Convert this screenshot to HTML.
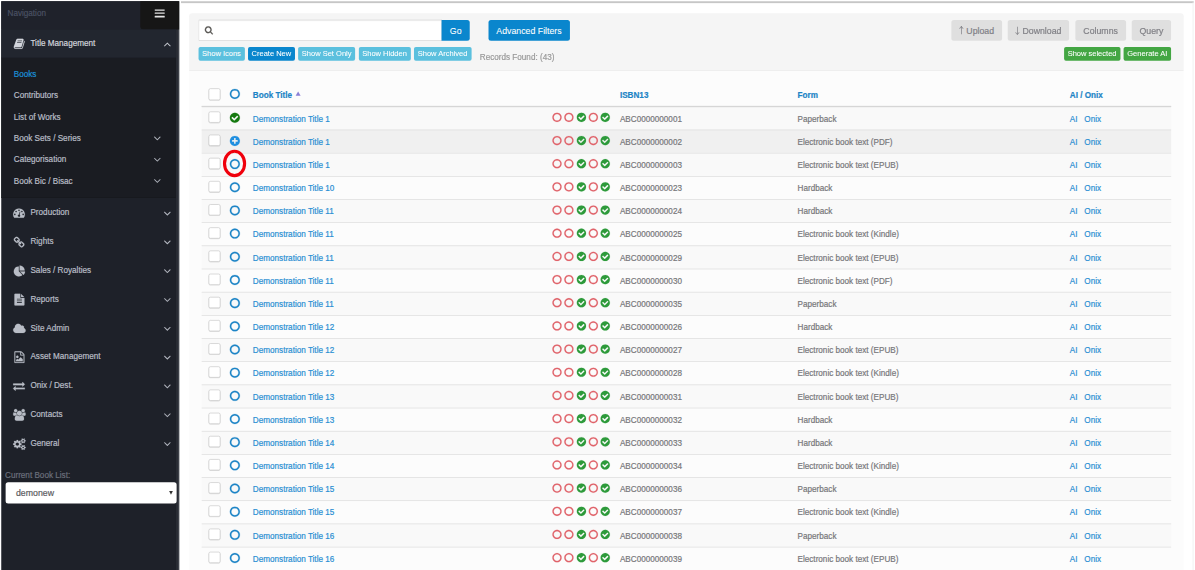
<!DOCTYPE html><html><head><meta charset="utf-8"><title>Books</title><style>
*{box-sizing:border-box}
html,body{margin:0;padding:0;background:#fff;overflow:hidden}
body{width:1195px;height:570px;position:relative;font-family:"Liberation Sans",Arial,Helvetica,sans-serif}
#scale{position:absolute;left:0;top:0;width:1910px;height:914px;transform-origin:0 0;transform:scale(0.6263) ;-webkit-text-stroke:0.3px;font-size:13px;line-height:20px;color:#77777a}
svg.fa{position:absolute;display:block;fill:currentColor;stroke:currentColor;stroke-width:0;overflow:visible}
a{text-decoration:none;color:#2a8fd3}
#topline{position:absolute;left:288.5px;top:2px;width:1617px;height:2.5px;background:#c6c6c6}
#rline{position:absolute;left:1904.4px;top:4px;width:1.5px;height:910px;background:#f4f4f4}
#side{position:absolute;left:2px;top:1.8px;width:284px;height:912px;background:#1e2129;color:#b9bdc6}
#side .strip{position:absolute;right:0;top:0;width:5.5px;height:100%;background:#282b33}
#side .edge{position:absolute;right:0;top:0;width:1.6px;height:100%;background:#3f424a}
#navhead{position:absolute;left:0;top:0;width:278.5px;height:45.2px;background:#1f222b}
#tog i{position:absolute;left:23.2px;width:16px;height:2.3px;background:#e4e4e4;border-radius:.5px}
#navhead .t{position:absolute;left:10px;top:10.5px;color:#4a5163;font-size:13px;line-height:20px}
#tog{position:absolute;right:0;top:0;width:62.5px;height:45.2px;background:#161616;color:#e8e8e8;border-radius:0 0 0 5px}
.mi{position:absolute;left:0;width:278.5px;height:46px}
.mi.open{background:#22262f;color:#d2d5dc;height:46.2px}
.mi .tx{position:absolute;left:46.6px;top:14px;line-height:20px;font-size:13px;white-space:nowrap}
#sub{position:absolute;left:0;top:90.7px;width:278.5px;height:223.4px;background:#1a1c22;border-bottom:1.5px solid #17191e}
.si{position:absolute;left:20px;width:250px;height:34px;line-height:34px;font-size:13px;white-space:nowrap}
.si.act{color:#1a8fd8}
#cbl{position:absolute;left:6px;top:747.2px;font-size:13px;line-height:20px;color:#6b707c;white-space:nowrap}
#sel{position:absolute;left:6.5px;top:768px;width:273.5px;height:34px;background:#fff;border-radius:4px;color:#5b5b60;font-size:14px;line-height:35.5px;padding-left:17px}
#sel .dd{position:absolute;right:6.5px;top:14px;width:0;height:0;border-left:3.6px solid transparent;border-right:3.6px solid transparent;border-top:6.5px solid #333}
#ph{position:absolute;left:301.5px;top:21.4px;width:1588.6px;height:91.6px;background:#f5f5f5;border-bottom:1.7px solid #d6d6d6;z-index:2;border-radius:5px 5px 0 0}
#pb{position:absolute;left:301.5px;top:112.8px;width:1588.6px;height:800px;background:#fcfcfc}
.btn{position:absolute;height:33.5px;line-height:34.5px;border-radius:4px;text-align:center;font-size:14px;white-space:nowrap}
.arw{display:inline-block;width:14px;margin:0 1px 0 -3.5px;text-align:center;font-family:"Noto Sans CJK SC","DejaVu Sans",sans-serif;font-size:14px;line-height:1;font-weight:400;position:relative;top:1.2px;-webkit-text-stroke:0.15px}
.xs{position:absolute;height:22px;line-height:22px;border-radius:3px;text-align:center;font-size:12px;white-space:nowrap;color:#fff}
.xs,.btn.prim{-webkit-text-stroke:0.1px}
.info{background:#5bc0de}
.prim{background:#0a86cd;color:#fff}
.succ{background:#43a643}
.def{background:#dfdfdf;color:#808086}
#q{position:absolute;left:15px;top:9.6px;width:389.2px;height:34.4px;background:#fff;border:1px solid #c8c8c8;border-top:1.6px solid #cfcfcf;border-radius:1px 0 0 1px;box-shadow:inset 0 1.5px 1.5px rgba(0,0,0,.09)}
#rf{position:absolute;left:464.5px;top:60.2px;line-height:20px;font-size:13px;color:#999;white-space:nowrap}
#tb{position:absolute;left:20px;top:0;width:1548px}
.tr{position:absolute;left:0;width:1548px;height:37px;border-top:1.1px solid #d9d9d9}
.tr.h{border-top:none;border-bottom:2px solid #d6d6d6;height:38.6px;z-index:2}
.tr.h .cb{top:8.5px}
.tr.h .c{top:9.1px}
.tr.odd{background:#f9f9f9}
.tr.hov{background:#f0f0f0}
.c{position:absolute;top:8.3px;line-height:20px;white-space:nowrap}
.tr.h .c{font-weight:bold;color:#1c84c6}
.cb{position:absolute;left:11px;top:6.6px;width:19.3px;height:18.3px;border:1px solid #c4c4c4;border-radius:3px;background:#fff;box-shadow:0 1px 1px rgba(0,0,0,.1)}
#ring{position:absolute;left:54.4px;top:126.2px;width:37.1px;height:43.6px;border:5.6px solid #f0000c;border-radius:50%}
.sa{display:inline-block;width:0;height:0;border-left:4px solid transparent;border-right:4px solid transparent;border-bottom:7px solid #8a7fd6;margin-left:2px;vertical-align:3px}
</style></head><body><div id="scale">
<div id="topline"></div><div id="rline"></div>
<div id="side"><div class="strip"></div><div class="edge"></div>
<div id="navhead"><div class="t">Navigation</div></div>
<div id="tog"><i style="top:13.0px"></i><i style="top:18.3px"></i><i style="top:23.6px"></i></div>
<div class="mi open" style="top:45.2px"><svg class="fa" viewBox="-0.5 -1408 1665.3 1536" style="left:19.93px;top:15.25px;width:17.35px;height:16.00px;stroke-width:24px;"><path d="M1639 -1058Q1679 -1001 1657 -929L1382 -23Q1363 41 1305.5 84.5Q1248 128 1183 128H260Q183 128 111.5 74.5Q40 21 12 -57Q-12 -124 10 -184Q10 -188 13 -211Q16 -234 17 -248Q18 -256 14 -269.5Q10 -283 11 -289Q13 -300 19 -310Q25 -320 35.5 -333.5Q46 -347 52 -357Q75 -395 97 -448.5Q119 -502 127 -540Q130 -550 127.5 -570Q125 -590 127 -598Q130 -609 144 -626Q158 -643 161 -649Q182 -685 203 -741Q224 -797 228 -831Q229 -840 225.5 -863Q222 -886 226 -891Q230 -904 248 -921.5Q266 -939 270 -944Q289 -970 312.5 -1028.5Q336 -1087 340 -1125Q341 -1133 337 -1150.5Q333 -1168 335 -1177Q337 -1185 344 -1195Q351 -1205 362 -1218Q373 -1231 379 -1239Q387 -1251 395.5 -1269.5Q404 -1288 410.5 -1304.5Q417 -1321 426.5 -1340.5Q436 -1360 446 -1372.5Q456 -1385 472.5 -1396Q489 -1407 508.5 -1407.5Q528 -1408 556 -1402L555 -1399Q593 -1408 606 -1408H1367Q1441 -1408 1481 -1352Q1521 -1296 1499 -1222L1225 -316Q1189 -197 1153.5 -162.5Q1118 -128 1025 -128H156Q129 -128 118 -113Q107 -97 117 -70Q141 0 261 0H1184Q1213 0 1240 -15.5Q1267 -31 1275 -57L1575 -1044Q1582 -1066 1580 -1101Q1618 -1086 1639 -1058ZM575 -1056Q571 -1043 577 -1033.5Q583 -1024 597 -1024H1205Q1218 -1024 1230.5 -1033.5Q1243 -1043 1247 -1056L1268 -1120Q1272 -1133 1266 -1142.5Q1260 -1152 1246 -1152H638Q625 -1152 612.5 -1142.5Q600 -1133 596 -1120ZM492 -800Q488 -787 494 -777.5Q500 -768 514 -768H1122Q1135 -768 1147.5 -777.5Q1160 -787 1164 -800L1185 -864Q1189 -877 1183 -886.5Q1177 -896 1163 -896H555Q542 -896 529.5 -886.5Q517 -877 513 -864Z"/></svg><div class="tx" style="top:12.4px">Title Management</div><svg class="fa" viewBox="77.0 -851.0 998.0 582.0" style="left:259.80px;top:21.31px;width:10.40px;height:6.06px;stroke-width:19px;"><path d="M1065 -329 1015 -279Q1005 -269 992 -269Q979 -269 969 -279L576 -672L183 -279Q173 -269 160 -269Q147 -269 137 -279L87 -329Q77 -339 77 -352Q77 -365 87 -375L553 -841Q563 -851 576 -851Q589 -851 599 -841L1065 -375Q1075 -365 1075 -352Q1075 -339 1065 -329Z"/></svg></div>
<div id="sub">
<div class="si act" style="top:9.5px">Books</div>
<div class="si " style="top:43.5px">Contributors</div>
<div class="si " style="top:77.5px">List of Works</div>
<div class="si " style="top:111.5px">Book Sets / Series<svg class="fa" viewBox="77.0 -883.0 998.0 582.0" style="left:224.10px;top:14.47px;width:10.40px;height:6.06px;stroke-width:10px;"><path d="M1065 -777 599 -311Q589 -301 576 -301Q563 -301 553 -311L87 -777Q77 -787 77 -800Q77 -813 87 -823L137 -873Q147 -883 160 -883Q173 -883 183 -873L576 -480L969 -873Q979 -883 992 -883Q1005 -883 1015 -873L1065 -823Q1075 -813 1075 -800Q1075 -787 1065 -777Z"/></svg></div>
<div class="si " style="top:145.5px">Categorisation<svg class="fa" viewBox="77.0 -883.0 998.0 582.0" style="left:224.10px;top:14.47px;width:10.40px;height:6.06px;stroke-width:10px;"><path d="M1065 -777 599 -311Q589 -301 576 -301Q563 -301 553 -311L87 -777Q77 -787 77 -800Q77 -813 87 -823L137 -873Q147 -883 160 -883Q173 -883 183 -873L576 -480L969 -873Q979 -883 992 -883Q1005 -883 1015 -873L1065 -823Q1075 -813 1075 -800Q1075 -787 1065 -777Z"/></svg></div>
<div class="si " style="top:179.5px">Book Bic / Bisac<svg class="fa" viewBox="77.0 -883.0 998.0 582.0" style="left:224.10px;top:14.47px;width:10.40px;height:6.06px;stroke-width:10px;"><path d="M1065 -777 599 -311Q589 -301 576 -301Q563 -301 553 -311L87 -777Q77 -787 77 -800Q77 -813 87 -823L137 -873Q147 -883 160 -883Q173 -883 183 -873L576 -480L969 -873Q979 -883 992 -883Q1005 -883 1015 -873L1065 -823Q1075 -813 1075 -800Q1075 -787 1065 -777Z"/></svg></div>
</div>
<div class="mi " style="top:314.1px"><svg class="fa" viewBox="0 -1280.0 1792 1408.0" style="left:19.27px;top:17.52px;width:18.67px;height:14.67px;stroke-width:24px;"><path d="M346.5 -293.5Q384 -331 384 -384Q384 -437 346.5 -474.5Q309 -512 256 -512Q203 -512 165.5 -474.5Q128 -437 128 -384Q128 -331 165.5 -293.5Q203 -256 256 -256Q309 -256 346.5 -293.5ZM538.5 -741.5Q576 -779 576 -832Q576 -885 538.5 -922.5Q501 -960 448 -960Q395 -960 357.5 -922.5Q320 -885 320 -832Q320 -779 357.5 -741.5Q395 -704 448 -704Q501 -704 538.5 -741.5ZM1004 -351 1105 -733Q1111 -759 1097.5 -781.5Q1084 -804 1059 -811Q1034 -818 1011 -804.5Q988 -791 981 -765L880 -383Q820 -378 773 -339.5Q726 -301 710 -241Q690 -164 730 -95Q770 -26 847 -6Q924 14 993 -26Q1062 -66 1082 -143Q1098 -203 1076 -260Q1054 -317 1004 -351ZM1626.5 -293.5Q1664 -331 1664 -384Q1664 -437 1626.5 -474.5Q1589 -512 1536 -512Q1483 -512 1445.5 -474.5Q1408 -437 1408 -384Q1408 -331 1445.5 -293.5Q1483 -256 1536 -256Q1589 -256 1626.5 -293.5ZM986.5 -933.5Q1024 -971 1024 -1024Q1024 -1077 986.5 -1114.5Q949 -1152 896 -1152Q843 -1152 805.5 -1114.5Q768 -1077 768 -1024Q768 -971 805.5 -933.5Q843 -896 896 -896Q949 -896 986.5 -933.5ZM1434.5 -741.5Q1472 -779 1472 -832Q1472 -885 1434.5 -922.5Q1397 -960 1344 -960Q1291 -960 1253.5 -922.5Q1216 -885 1216 -832Q1216 -779 1253.5 -741.5Q1291 -704 1344 -704Q1397 -704 1434.5 -741.5ZM1792 -384Q1792 -123 1651 99Q1632 128 1597 128H195Q160 128 141 99Q0 -122 0 -384Q0 -566 71 -732Q142 -898 262 -1018Q382 -1138 548 -1209Q714 -1280 896 -1280Q1078 -1280 1244 -1209Q1410 -1138 1530 -1018Q1650 -898 1721 -732Q1792 -566 1792 -384Z"/></svg><div class="tx" style="top:14.0px">Production</div><svg class="fa" viewBox="77.0 -883.0 998.0 582.0" style="left:259.80px;top:22.27px;width:10.40px;height:6.06px;stroke-width:19px;"><path d="M1065 -777 599 -311Q589 -301 576 -301Q563 -301 553 -311L87 -777Q77 -787 77 -800Q77 -813 87 -823L137 -873Q147 -883 160 -883Q173 -883 183 -873L576 -480L969 -873Q979 -883 992 -883Q1005 -883 1015 -873L1065 -823Q1075 -813 1075 -800Q1075 -787 1065 -777Z"/></svg></div>
<div class="mi " style="top:360.1px"><svg class="fa" viewBox="16.0 -1520 1632.0 1632" style="left:20.10px;top:16.35px;width:17.00px;height:17.00px;stroke-width:24px;"><path d="M1456 -320Q1456 -360 1428 -388L1220 -596Q1192 -624 1152 -624Q1110 -624 1080 -592Q1083 -589 1099 -573.5Q1115 -558 1120.5 -552Q1126 -546 1135.5 -533Q1145 -520 1148.5 -507.5Q1152 -495 1152 -480Q1152 -440 1124 -412Q1096 -384 1056 -384Q1041 -384 1028.5 -387.5Q1016 -391 1003 -400.5Q990 -410 984 -415.5Q978 -421 962.5 -437Q947 -453 944 -456Q911 -425 911 -383Q911 -343 939 -315L1145 -108Q1172 -81 1213 -81Q1253 -81 1281 -107L1428 -253Q1456 -281 1456 -320ZM753 -1025Q753 -1065 725 -1093L519 -1300Q491 -1328 451 -1328Q412 -1328 383 -1301L236 -1155Q208 -1127 208 -1088Q208 -1048 236 -1020L444 -812Q471 -785 512 -785Q554 -785 584 -816Q581 -819 565 -834.5Q549 -850 543.5 -856Q538 -862 528.5 -875Q519 -888 515.5 -900.5Q512 -913 512 -928Q512 -968 540 -996Q568 -1024 608 -1024Q623 -1024 635.5 -1020.5Q648 -1017 661 -1007.5Q674 -998 680 -992.5Q686 -987 701.5 -971Q717 -955 720 -952Q753 -983 753 -1025ZM1563 -117 1416 29Q1333 112 1213 112Q1092 112 1009 27L803 -180Q720 -263 720 -383Q720 -506 808 -592L720 -680Q634 -592 512 -592Q392 -592 308 -676L100 -884Q16 -968 16 -1088Q16 -1208 101 -1291L248 -1437Q331 -1520 451 -1520Q572 -1520 655 -1435L861 -1228Q944 -1145 944 -1025Q944 -902 856 -816L944 -728Q1030 -816 1152 -816Q1272 -816 1356 -732L1564 -524Q1648 -440 1648 -320Q1648 -200 1563 -117Z"/></svg><div class="tx" style="top:14.0px">Rights</div><svg class="fa" viewBox="77.0 -883.0 998.0 582.0" style="left:259.80px;top:22.27px;width:10.40px;height:6.06px;stroke-width:19px;"><path d="M1065 -777 599 -311Q589 -301 576 -301Q563 -301 553 -311L87 -777Q77 -787 77 -800Q77 -813 87 -823L137 -873Q147 -883 160 -883Q173 -883 183 -873L576 -480L969 -873Q979 -883 992 -883Q1005 -883 1015 -873L1065 -823Q1075 -813 1075 -800Q1075 -787 1065 -777Z"/></svg></div>
<div class="mi " style="top:406.1px"><svg class="fa" viewBox="0.0 -1536 1728.0 1664" style="left:19.60px;top:16.18px;width:18.00px;height:17.34px;stroke-width:24px;"><path d="M768 -646 1314 -100Q1208 8 1066.5 68Q925 128 768 128Q559 128 382.5 25Q206 -78 103 -254.5Q0 -431 0 -640Q0 -849 103 -1025.5Q206 -1202 382.5 -1305Q559 -1408 768 -1408ZM955 -640H1728Q1728 -483 1668 -341.5Q1608 -200 1500 -94ZM1664 -768H896V-1536Q1105 -1536 1281.5 -1433Q1458 -1330 1561 -1153.5Q1664 -977 1664 -768Z"/></svg><div class="tx" style="top:14.0px">Sales / Royalties</div><svg class="fa" viewBox="77.0 -883.0 998.0 582.0" style="left:259.80px;top:22.27px;width:10.40px;height:6.06px;stroke-width:19px;"><path d="M1065 -777 599 -311Q589 -301 576 -301Q563 -301 553 -311L87 -777Q77 -787 77 -800Q77 -813 87 -823L137 -873Q147 -883 160 -883Q173 -883 183 -873L576 -480L969 -873Q979 -883 992 -883Q1005 -883 1015 -873L1065 -823Q1075 -813 1075 -800Q1075 -787 1065 -777Z"/></svg></div>
<div class="mi " style="top:452.1px"><svg class="fa" viewBox="0 -1536 1536 1792" style="left:20.60px;top:15.52px;width:16.00px;height:18.67px;stroke-width:24px;"><path d="M1468 -1060Q1482 -1046 1496 -1024H1024V-1496Q1046 -1482 1060 -1468ZM992 -896H1536V160Q1536 200 1508 228Q1480 256 1440 256H96Q56 256 28 228Q0 200 0 160V-1440Q0 -1480 28 -1508Q56 -1536 96 -1536H896V-992Q896 -952 924 -924Q952 -896 992 -896ZM1152 -160V-224Q1152 -238 1143 -247Q1134 -256 1120 -256H416Q402 -256 393 -247Q384 -238 384 -224V-160Q384 -146 393 -137Q402 -128 416 -128H1120Q1134 -128 1143 -137Q1152 -146 1152 -160ZM1152 -416V-480Q1152 -494 1143 -503Q1134 -512 1120 -512H416Q402 -512 393 -503Q384 -494 384 -480V-416Q384 -402 393 -393Q402 -384 416 -384H1120Q1134 -384 1143 -393Q1152 -402 1152 -416ZM1152 -672V-736Q1152 -750 1143 -759Q1134 -768 1120 -768H416Q402 -768 393 -759Q384 -750 384 -736V-672Q384 -658 393 -649Q402 -640 416 -640H1120Q1134 -640 1143 -649Q1152 -658 1152 -672Z"/></svg><div class="tx" style="top:14.0px">Reports</div><svg class="fa" viewBox="77.0 -883.0 998.0 582.0" style="left:259.80px;top:22.27px;width:10.40px;height:6.06px;stroke-width:19px;"><path d="M1065 -777 599 -311Q589 -301 576 -301Q563 -301 553 -311L87 -777Q77 -787 77 -800Q77 -813 87 -823L137 -873Q147 -883 160 -883Q173 -883 183 -873L576 -480L969 -873Q979 -883 992 -883Q1005 -883 1015 -873L1065 -823Q1075 -813 1075 -800Q1075 -787 1065 -777Z"/></svg></div>
<div class="mi " style="top:498.1px"><svg class="fa" viewBox="0 -1408 1920 1408" style="left:18.60px;top:17.52px;width:20.00px;height:14.67px;stroke-width:24px;"><path d="M1920 -384Q1920 -225 1807.5 -112.5Q1695 0 1536 0H448Q263 0 131.5 -131.5Q0 -263 0 -448Q0 -580 71 -689.5Q142 -799 258 -853Q256 -881 256 -896Q256 -1108 406 -1258Q556 -1408 768 -1408Q926 -1408 1054.5 -1320Q1183 -1232 1242 -1090Q1312 -1152 1408 -1152Q1514 -1152 1589 -1077Q1664 -1002 1664 -896Q1664 -821 1623 -758Q1752 -728 1836 -623.5Q1920 -519 1920 -384Z"/></svg><div class="tx" style="top:14.0px">Site Admin</div><svg class="fa" viewBox="77.0 -883.0 998.0 582.0" style="left:259.80px;top:22.27px;width:10.40px;height:6.06px;stroke-width:19px;"><path d="M1065 -777 599 -311Q589 -301 576 -301Q563 -301 553 -311L87 -777Q77 -787 77 -800Q77 -813 87 -823L137 -873Q147 -883 160 -883Q173 -883 183 -873L576 -480L969 -873Q979 -883 992 -883Q1005 -883 1015 -873L1065 -823Q1075 -813 1075 -800Q1075 -787 1065 -777Z"/></svg></div>
<div class="mi " style="top:544.1px"><svg class="fa" viewBox="0 -1536 1536 1792" style="left:20.60px;top:15.52px;width:16.00px;height:18.67px;stroke-width:24px;"><path d="M1468 -1156Q1496 -1128 1516 -1080Q1536 -1032 1536 -992V160Q1536 200 1508 228Q1480 256 1440 256H96Q56 256 28 228Q0 200 0 160V-1440Q0 -1480 28 -1508Q56 -1536 96 -1536H992Q1032 -1536 1080 -1516Q1128 -1496 1156 -1468ZM1024 -1400V-1024H1400Q1390 -1053 1378 -1065L1065 -1378Q1053 -1390 1024 -1400ZM1408 128V-896H992Q952 -896 924 -924Q896 -952 896 -992V-1408H128V128ZM1280 -320V0H256V-192L448 -384L576 -256L960 -640ZM584 -568Q528 -512 448 -512Q368 -512 312 -568Q256 -624 256 -704Q256 -784 312 -840Q368 -896 448 -896Q528 -896 584 -840Q640 -784 640 -704Q640 -624 584 -568Z"/></svg><div class="tx" style="top:14.0px">Asset Management</div><svg class="fa" viewBox="77.0 -883.0 998.0 582.0" style="left:259.80px;top:22.27px;width:10.40px;height:6.06px;stroke-width:19px;"><path d="M1065 -777 599 -311Q589 -301 576 -301Q563 -301 553 -311L87 -777Q77 -787 77 -800Q77 -813 87 -823L137 -873Q147 -883 160 -883Q173 -883 183 -873L576 -480L969 -873Q979 -883 992 -883Q1005 -883 1015 -873L1065 -823Q1075 -813 1075 -800Q1075 -787 1065 -777Z"/></svg></div>
<div class="mi " style="top:590.1px"><svg class="fa" viewBox="0 -1248 1792 1344" style="left:19.27px;top:17.85px;width:18.67px;height:14.00px;stroke-width:24px;"><path d="M1792 -352V-160Q1792 -147 1782.5 -137.5Q1773 -128 1760 -128H384V64Q384 77 374.5 86.5Q365 96 352 96Q340 96 328 86L9 -234Q0 -243 0 -256Q0 -270 9 -279L329 -599Q338 -608 352 -608Q365 -608 374.5 -598.5Q384 -589 384 -576V-384H1760Q1773 -384 1782.5 -374.5Q1792 -365 1792 -352ZM1783 -873 1463 -553Q1454 -544 1440 -544Q1427 -544 1417.5 -553.5Q1408 -563 1408 -576V-768H32Q19 -768 9.5 -777.5Q0 -787 0 -800V-992Q0 -1005 9.5 -1014.5Q19 -1024 32 -1024H1408V-1216Q1408 -1230 1417 -1239Q1426 -1248 1440 -1248Q1452 -1248 1464 -1238L1783 -919Q1792 -910 1792 -896Q1792 -882 1783 -873Z"/></svg><div class="tx" style="top:14.0px">Onix / Dest.</div><svg class="fa" viewBox="77.0 -883.0 998.0 582.0" style="left:259.80px;top:22.27px;width:10.40px;height:6.06px;stroke-width:19px;"><path d="M1065 -777 599 -311Q589 -301 576 -301Q563 -301 553 -311L87 -777Q77 -787 77 -800Q77 -813 87 -823L137 -873Q147 -883 160 -883Q173 -883 183 -873L576 -480L969 -873Q979 -883 992 -883Q1005 -883 1015 -873L1065 -823Q1075 -813 1075 -800Q1075 -787 1065 -777Z"/></svg></div>
<div class="mi " style="top:636.1px"><svg class="fa" viewBox="0 -1536.0 1920 1792.0" style="left:18.60px;top:15.52px;width:20.00px;height:18.67px;stroke-width:24px;"><path d="M593 -640Q431 -635 328 -512H194Q112 -512 56 -552.5Q0 -593 0 -671Q0 -1024 124 -1024Q130 -1024 167.5 -1003Q205 -982 265 -960.5Q325 -939 384 -939Q451 -939 517 -962Q512 -925 512 -896Q512 -757 593 -640ZM1664 -3Q1664 117 1591 186.5Q1518 256 1397 256H523Q402 256 329 186.5Q256 117 256 -3Q256 -56 259.5 -106.5Q263 -157 273.5 -215.5Q284 -274 300 -324Q316 -374 343 -421.5Q370 -469 405 -502.5Q440 -536 490.5 -556Q541 -576 602 -576Q612 -576 645 -554.5Q678 -533 718 -506.5Q758 -480 825 -458.5Q892 -437 960 -437Q1028 -437 1095 -458.5Q1162 -480 1202 -506.5Q1242 -533 1275 -554.5Q1308 -576 1318 -576Q1379 -576 1429.5 -556Q1480 -536 1515 -502.5Q1550 -469 1577 -421.5Q1604 -374 1620 -324Q1636 -274 1646.5 -215.5Q1657 -157 1660.5 -106.5Q1664 -56 1664 -3ZM565 -1461Q640 -1386 640 -1280Q640 -1174 565 -1099Q490 -1024 384 -1024Q278 -1024 203 -1099Q128 -1174 128 -1280Q128 -1386 203 -1461Q278 -1536 384 -1536Q490 -1536 565 -1461ZM1231.5 -1167.5Q1344 -1055 1344 -896Q1344 -737 1231.5 -624.5Q1119 -512 960 -512Q801 -512 688.5 -624.5Q576 -737 576 -896Q576 -1055 688.5 -1167.5Q801 -1280 960 -1280Q1119 -1280 1231.5 -1167.5ZM1920 -671Q1920 -593 1864 -552.5Q1808 -512 1726 -512H1592Q1489 -635 1327 -640Q1408 -757 1408 -896Q1408 -925 1403 -962Q1469 -939 1536 -939Q1595 -939 1655 -960.5Q1715 -982 1752.5 -1003Q1790 -1024 1796 -1024Q1920 -1024 1920 -671ZM1717 -1461Q1792 -1386 1792 -1280Q1792 -1174 1717 -1099Q1642 -1024 1536 -1024Q1430 -1024 1355 -1099Q1280 -1174 1280 -1280Q1280 -1386 1355 -1461Q1430 -1536 1536 -1536Q1642 -1536 1717 -1461Z"/></svg><div class="tx" style="top:14.0px">Contacts</div><svg class="fa" viewBox="77.0 -883.0 998.0 582.0" style="left:259.80px;top:22.27px;width:10.40px;height:6.06px;stroke-width:19px;"><path d="M1065 -777 599 -311Q589 -301 576 -301Q563 -301 553 -311L87 -777Q77 -787 77 -800Q77 -813 87 -823L137 -873Q147 -883 160 -883Q173 -883 183 -873L576 -480L969 -873Q979 -883 992 -883Q1005 -883 1015 -873L1065 -823Q1075 -813 1075 -800Q1075 -787 1065 -777Z"/></svg></div>
<div class="mi " style="top:682.1px"><svg class="fa" viewBox="0 -1520 1920 1761" style="left:18.60px;top:15.68px;width:20.00px;height:18.35px;stroke-width:24px;"><path d="M821 -459Q896 -534 896 -640Q896 -746 821 -821Q746 -896 640 -896Q534 -896 459 -821Q384 -746 384 -640Q384 -534 459 -459Q534 -384 640 -384Q746 -384 821 -459ZM1664 -128Q1664 -180 1626 -218Q1588 -256 1536 -256Q1484 -256 1446 -218Q1408 -180 1408 -128Q1408 -75 1445.5 -37.5Q1483 0 1536 0Q1589 0 1626.5 -37.5Q1664 -75 1664 -128ZM1664 -1152Q1664 -1204 1626 -1242Q1588 -1280 1536 -1280Q1484 -1280 1446 -1242Q1408 -1204 1408 -1152Q1408 -1099 1445.5 -1061.5Q1483 -1024 1536 -1024Q1589 -1024 1626.5 -1061.5Q1664 -1099 1664 -1152ZM1280 -731V-546Q1280 -536 1273 -526.5Q1266 -517 1257 -516L1102 -492Q1091 -457 1070 -416Q1104 -368 1160 -301Q1167 -290 1167 -281Q1167 -269 1160 -262Q1137 -232 1077.5 -172.5Q1018 -113 999 -113Q988 -113 978 -120L863 -210Q826 -191 786 -179Q775 -71 763 -24Q756 0 733 0H547Q536 0 527 -7.5Q518 -15 517 -25L494 -178Q460 -188 419 -209L301 -120Q294 -113 281 -113Q270 -113 260 -121Q116 -254 116 -281Q116 -290 123 -300Q133 -314 164 -353Q195 -392 211 -414Q188 -458 176 -496L24 -520Q14 -521 7 -529.5Q0 -538 0 -549V-734Q0 -744 7 -753.5Q14 -763 23 -764L178 -788Q189 -823 210 -864Q176 -912 120 -979Q113 -990 113 -999Q113 -1011 120 -1019Q142 -1049 202 -1108Q262 -1167 281 -1167Q292 -1167 302 -1160L417 -1070Q451 -1088 494 -1102Q505 -1210 517 -1256Q524 -1280 547 -1280H733Q744 -1280 753 -1272.5Q762 -1265 763 -1255L786 -1102Q820 -1092 861 -1071L979 -1160Q987 -1167 999 -1167Q1010 -1167 1020 -1159Q1164 -1026 1164 -999Q1164 -991 1157 -980Q1145 -964 1115 -926Q1085 -888 1070 -866Q1093 -818 1104 -784L1256 -761Q1266 -759 1273 -750.5Q1280 -742 1280 -731ZM1920 -198V-58Q1920 -42 1771 -27Q1759 0 1741 25Q1792 138 1792 163Q1792 167 1788 170Q1666 241 1664 241Q1656 241 1618 194Q1580 147 1566 126Q1546 128 1536 128Q1526 128 1506 126Q1492 147 1454 194Q1416 241 1408 241Q1406 241 1284 170Q1280 167 1280 163Q1280 138 1331 25Q1313 0 1301 -27Q1152 -42 1152 -58V-198Q1152 -214 1301 -229Q1314 -258 1331 -281Q1280 -394 1280 -419Q1280 -423 1284 -426Q1288 -428 1319 -446Q1350 -464 1378 -480Q1406 -496 1408 -496Q1416 -496 1454 -449.5Q1492 -403 1506 -382Q1526 -384 1536 -384Q1546 -384 1566 -382Q1617 -453 1658 -494L1664 -496Q1668 -496 1788 -426Q1792 -423 1792 -419Q1792 -394 1741 -281Q1758 -258 1771 -229Q1920 -214 1920 -198ZM1920 -1222V-1082Q1920 -1066 1771 -1051Q1759 -1024 1741 -999Q1792 -886 1792 -861Q1792 -857 1788 -854Q1666 -783 1664 -783Q1656 -783 1618 -830Q1580 -877 1566 -898Q1546 -896 1536 -896Q1526 -896 1506 -898Q1492 -877 1454 -830Q1416 -783 1408 -783Q1406 -783 1284 -854Q1280 -857 1280 -861Q1280 -886 1331 -999Q1313 -1024 1301 -1051Q1152 -1066 1152 -1082V-1222Q1152 -1238 1301 -1253Q1314 -1282 1331 -1305Q1280 -1418 1280 -1443Q1280 -1447 1284 -1450Q1288 -1452 1319 -1470Q1350 -1488 1378 -1504Q1406 -1520 1408 -1520Q1416 -1520 1454 -1473.5Q1492 -1427 1506 -1406Q1526 -1408 1536 -1408Q1546 -1408 1566 -1406Q1617 -1477 1658 -1518L1664 -1520Q1668 -1520 1788 -1450Q1792 -1447 1792 -1443Q1792 -1418 1741 -1305Q1758 -1282 1771 -1253Q1920 -1238 1920 -1222Z"/></svg><div class="tx" style="top:14.0px">General</div><svg class="fa" viewBox="77.0 -883.0 998.0 582.0" style="left:259.80px;top:22.27px;width:10.40px;height:6.06px;stroke-width:19px;"><path d="M1065 -777 599 -311Q589 -301 576 -301Q563 -301 553 -311L87 -777Q77 -787 77 -800Q77 -813 87 -823L137 -873Q147 -883 160 -883Q173 -883 183 -873L576 -480L969 -873Q979 -883 992 -883Q1005 -883 1015 -873L1065 -823Q1075 -813 1075 -800Q1075 -787 1065 -777Z"/></svg></div>
<div id="cbl">Current Book List:</div><div id="sel">demonew<span class="dd"></span></div>
</div>
<div id="ph">
<div id="q"><svg class="fa" viewBox="0.0 -1408.0 1664.0 1664.0" style="left:9.80px;top:10.10px;width:13.00px;height:13.00px;fill:#5a5856;stroke:#5a5856;stroke-width:26px;"><path d="M1020.5 -387.5Q1152 -519 1152 -704Q1152 -889 1020.5 -1020.5Q889 -1152 704 -1152Q519 -1152 387.5 -1020.5Q256 -889 256 -704Q256 -519 387.5 -387.5Q519 -256 704 -256Q889 -256 1020.5 -387.5ZM1664 128Q1664 180 1626 218Q1588 256 1536 256Q1482 256 1446 218L1103 -124Q924 0 704 0Q561 0 430.5 -55.5Q300 -111 205.5 -205.5Q111 -300 55.5 -430.5Q0 -561 0 -704Q0 -847 55.5 -977.5Q111 -1108 205.5 -1202.5Q300 -1297 430.5 -1352.5Q561 -1408 704 -1408Q847 -1408 977.5 -1352.5Q1108 -1297 1202.5 -1202.5Q1297 -1108 1352.5 -977.5Q1408 -847 1408 -704Q1408 -484 1284 -305L1627 38Q1664 75 1664 128Z"/></svg></div>
<div class="btn prim" style="left:403.4px;top:10.5px;width:45.5px;border-radius:0 4px 4px 0">Go</div>
<div class="btn prim" style="left:478.2px;top:10.5px;width:130px">Advanced Filters</div>
<div class="xs info" style="left:15.0px;top:54px;width:74.2px">Show Icons</div>
<div class="xs prim" style="left:94.3px;top:54px;width:75px">Create New</div>
<div class="xs info" style="left:174.3px;top:54px;width:91.5px">Show Set Only</div>
<div class="xs info" style="left:271px;top:54px;width:83px">Show Hidden</div>
<div class="xs info" style="left:359.2px;top:54px;width:92px">Show Archived</div>
<div id="rf">Records Found: (43)</div>
<div class="btn def" style="left:1217.2px;top:10.5px;width:81.4px"><span class="arw">&#8593;</span>Upload</div>
<div class="btn def" style="left:1307.1px;top:10.5px;width:98.6px"><span class="arw">&#8595;</span>Download</div>
<div class="btn def" style="left:1415.3px;top:10.5px;width:81px">Columns</div>
<div class="btn def" style="left:1505.2px;top:10.5px;width:63.6px">Query</div>
<div class="xs succ" style="left:1397.2px;top:54px;width:90px">Show selected</div>
<div class="xs succ" style="left:1492px;top:54px;width:76.8px">Generate AI</div>
</div>
<div id="pb"><div id="tb">
<div class="tr h" style="top:20px"><div class="cb"></div><svg class="fa" viewBox="0.0 -1408.0 1536.0 1536.0" style="left:45.60px;top:9.30px;width:16.00px;height:16.00px;fill:#1c84c6;stroke:#1c84c6;stroke-width:29px;"><path d="M1041 -1111Q916 -1184 768 -1184Q620 -1184 495 -1111Q370 -1038 297 -913Q224 -788 224 -640Q224 -492 297 -367Q370 -242 495 -169Q620 -96 768 -96Q916 -96 1041 -169Q1166 -242 1239 -367Q1312 -492 1312 -640Q1312 -788 1239 -913Q1166 -1038 1041 -1111ZM1433 -1025.5Q1536 -849 1536 -640Q1536 -431 1433 -254.5Q1330 -78 1153.5 25Q977 128 768 128Q559 128 382.5 25Q206 -78 103 -254.5Q0 -431 0 -640Q0 -849 103 -1025.5Q206 -1202 382.5 -1305Q559 -1408 768 -1408Q977 -1408 1153.5 -1305Q1330 -1202 1433 -1025.5Z"/></svg><div class="c" style="left:82.2px">Book Title <span class="sa"></span></div><div class="c" style="left:668.3px">ISBN13</div><div class="c" style="left:951.9px">Form</div><div class="c" style="left:1386.7px">AI / Onix</div></div>
<div class="tr odd" style="top:57.7px"><div class="cb"></div><svg class="fa" viewBox="0.0 -1408.0 1536.0 1536.0" style="left:45.60px;top:8.70px;width:16.00px;height:16.00px;fill:#15790f;stroke:#15790f;stroke-width:19px;"><path d="M1284 -802Q1284 -830 1266 -848L1175 -938Q1156 -957 1130 -957Q1104 -957 1085 -938L677 -531L451 -757Q432 -776 406 -776Q380 -776 361 -757L270 -667Q252 -649 252 -621Q252 -594 270 -576L632 -214Q651 -195 677 -195Q704 -195 723 -214L1266 -757Q1284 -775 1284 -802ZM1433 -1025.5Q1536 -849 1536 -640Q1536 -431 1433 -254.5Q1330 -78 1153.5 25Q977 128 768 128Q559 128 382.5 25Q206 -78 103 -254.5Q0 -431 0 -640Q0 -849 103 -1025.5Q206 -1202 382.5 -1305Q559 -1408 768 -1408Q977 -1408 1153.5 -1305Q1330 -1202 1433 -1025.5Z"/></svg><div class="c" style="left:82.2px"><a>Demonstration Title 1</a></div><svg class="fa" viewBox="0.0 -1408.0 1536.0 1536.0" style="left:560.63px;top:8.93px;width:14.74px;height:14.74px;fill:#e0636a;stroke:#e0636a;stroke-width:21px;"><path d="M1041 -1111Q916 -1184 768 -1184Q620 -1184 495 -1111Q370 -1038 297 -913Q224 -788 224 -640Q224 -492 297 -367Q370 -242 495 -169Q620 -96 768 -96Q916 -96 1041 -169Q1166 -242 1239 -367Q1312 -492 1312 -640Q1312 -788 1239 -913Q1166 -1038 1041 -1111ZM1433 -1025.5Q1536 -849 1536 -640Q1536 -431 1433 -254.5Q1330 -78 1153.5 25Q977 128 768 128Q559 128 382.5 25Q206 -78 103 -254.5Q0 -431 0 -640Q0 -849 103 -1025.5Q206 -1202 382.5 -1305Q559 -1408 768 -1408Q977 -1408 1153.5 -1305Q1330 -1202 1433 -1025.5Z"/></svg><svg class="fa" viewBox="0.0 -1408.0 1536.0 1536.0" style="left:579.88px;top:8.93px;width:14.74px;height:14.74px;fill:#e0636a;stroke:#e0636a;stroke-width:21px;"><path d="M1041 -1111Q916 -1184 768 -1184Q620 -1184 495 -1111Q370 -1038 297 -913Q224 -788 224 -640Q224 -492 297 -367Q370 -242 495 -169Q620 -96 768 -96Q916 -96 1041 -169Q1166 -242 1239 -367Q1312 -492 1312 -640Q1312 -788 1239 -913Q1166 -1038 1041 -1111ZM1433 -1025.5Q1536 -849 1536 -640Q1536 -431 1433 -254.5Q1330 -78 1153.5 25Q977 128 768 128Q559 128 382.5 25Q206 -78 103 -254.5Q0 -431 0 -640Q0 -849 103 -1025.5Q206 -1202 382.5 -1305Q559 -1408 768 -1408Q977 -1408 1153.5 -1305Q1330 -1202 1433 -1025.5Z"/></svg><svg class="fa" viewBox="0.0 -1408.0 1536.0 1536.0" style="left:599.13px;top:8.93px;width:14.74px;height:14.74px;fill:#2d9a3a;stroke:#2d9a3a;stroke-width:21px;"><path d="M1284 -802Q1284 -830 1266 -848L1175 -938Q1156 -957 1130 -957Q1104 -957 1085 -938L677 -531L451 -757Q432 -776 406 -776Q380 -776 361 -757L270 -667Q252 -649 252 -621Q252 -594 270 -576L632 -214Q651 -195 677 -195Q704 -195 723 -214L1266 -757Q1284 -775 1284 -802ZM1433 -1025.5Q1536 -849 1536 -640Q1536 -431 1433 -254.5Q1330 -78 1153.5 25Q977 128 768 128Q559 128 382.5 25Q206 -78 103 -254.5Q0 -431 0 -640Q0 -849 103 -1025.5Q206 -1202 382.5 -1305Q559 -1408 768 -1408Q977 -1408 1153.5 -1305Q1330 -1202 1433 -1025.5Z"/></svg><svg class="fa" viewBox="0.0 -1408.0 1536.0 1536.0" style="left:618.38px;top:8.93px;width:14.74px;height:14.74px;fill:#e0636a;stroke:#e0636a;stroke-width:21px;"><path d="M1041 -1111Q916 -1184 768 -1184Q620 -1184 495 -1111Q370 -1038 297 -913Q224 -788 224 -640Q224 -492 297 -367Q370 -242 495 -169Q620 -96 768 -96Q916 -96 1041 -169Q1166 -242 1239 -367Q1312 -492 1312 -640Q1312 -788 1239 -913Q1166 -1038 1041 -1111ZM1433 -1025.5Q1536 -849 1536 -640Q1536 -431 1433 -254.5Q1330 -78 1153.5 25Q977 128 768 128Q559 128 382.5 25Q206 -78 103 -254.5Q0 -431 0 -640Q0 -849 103 -1025.5Q206 -1202 382.5 -1305Q559 -1408 768 -1408Q977 -1408 1153.5 -1305Q1330 -1202 1433 -1025.5Z"/></svg><svg class="fa" viewBox="0.0 -1408.0 1536.0 1536.0" style="left:637.63px;top:8.93px;width:14.74px;height:14.74px;fill:#2d9a3a;stroke:#2d9a3a;stroke-width:21px;"><path d="M1284 -802Q1284 -830 1266 -848L1175 -938Q1156 -957 1130 -957Q1104 -957 1085 -938L677 -531L451 -757Q432 -776 406 -776Q380 -776 361 -757L270 -667Q252 -649 252 -621Q252 -594 270 -576L632 -214Q651 -195 677 -195Q704 -195 723 -214L1266 -757Q1284 -775 1284 -802ZM1433 -1025.5Q1536 -849 1536 -640Q1536 -431 1433 -254.5Q1330 -78 1153.5 25Q977 128 768 128Q559 128 382.5 25Q206 -78 103 -254.5Q0 -431 0 -640Q0 -849 103 -1025.5Q206 -1202 382.5 -1305Q559 -1408 768 -1408Q977 -1408 1153.5 -1305Q1330 -1202 1433 -1025.5Z"/></svg><div class="c" style="left:668.3px">ABC0000000001</div><div class="c" style="left:951.9px">Paperback</div><div class="c" style="left:1386.7px"><a>AI</a> &nbsp; <a>Onix</a></div></div>
<div class="tr hov" style="top:94.7px"><div class="cb"></div><svg class="fa" viewBox="0.0 -1408.0 1536.0 1536.0" style="left:45.60px;top:8.70px;width:16.00px;height:16.00px;fill:#1f8fe0;stroke:#1f8fe0;stroke-width:19px;"><path d="M1216 -576V-704Q1216 -730 1197 -749Q1178 -768 1152 -768H896V-1024Q896 -1050 877 -1069Q858 -1088 832 -1088H704Q678 -1088 659 -1069Q640 -1050 640 -1024V-768H384Q358 -768 339 -749Q320 -730 320 -704V-576Q320 -550 339 -531Q358 -512 384 -512H640V-256Q640 -230 659 -211Q678 -192 704 -192H832Q858 -192 877 -211Q896 -230 896 -256V-512H1152Q1178 -512 1197 -531Q1216 -550 1216 -576ZM1433 -1025.5Q1536 -849 1536 -640Q1536 -431 1433 -254.5Q1330 -78 1153.5 25Q977 128 768 128Q559 128 382.5 25Q206 -78 103 -254.5Q0 -431 0 -640Q0 -849 103 -1025.5Q206 -1202 382.5 -1305Q559 -1408 768 -1408Q977 -1408 1153.5 -1305Q1330 -1202 1433 -1025.5Z"/></svg><div class="c" style="left:82.2px"><a>Demonstration Title 1</a></div><svg class="fa" viewBox="0.0 -1408.0 1536.0 1536.0" style="left:560.63px;top:8.93px;width:14.74px;height:14.74px;fill:#e0636a;stroke:#e0636a;stroke-width:21px;"><path d="M1041 -1111Q916 -1184 768 -1184Q620 -1184 495 -1111Q370 -1038 297 -913Q224 -788 224 -640Q224 -492 297 -367Q370 -242 495 -169Q620 -96 768 -96Q916 -96 1041 -169Q1166 -242 1239 -367Q1312 -492 1312 -640Q1312 -788 1239 -913Q1166 -1038 1041 -1111ZM1433 -1025.5Q1536 -849 1536 -640Q1536 -431 1433 -254.5Q1330 -78 1153.5 25Q977 128 768 128Q559 128 382.5 25Q206 -78 103 -254.5Q0 -431 0 -640Q0 -849 103 -1025.5Q206 -1202 382.5 -1305Q559 -1408 768 -1408Q977 -1408 1153.5 -1305Q1330 -1202 1433 -1025.5Z"/></svg><svg class="fa" viewBox="0.0 -1408.0 1536.0 1536.0" style="left:579.88px;top:8.93px;width:14.74px;height:14.74px;fill:#e0636a;stroke:#e0636a;stroke-width:21px;"><path d="M1041 -1111Q916 -1184 768 -1184Q620 -1184 495 -1111Q370 -1038 297 -913Q224 -788 224 -640Q224 -492 297 -367Q370 -242 495 -169Q620 -96 768 -96Q916 -96 1041 -169Q1166 -242 1239 -367Q1312 -492 1312 -640Q1312 -788 1239 -913Q1166 -1038 1041 -1111ZM1433 -1025.5Q1536 -849 1536 -640Q1536 -431 1433 -254.5Q1330 -78 1153.5 25Q977 128 768 128Q559 128 382.5 25Q206 -78 103 -254.5Q0 -431 0 -640Q0 -849 103 -1025.5Q206 -1202 382.5 -1305Q559 -1408 768 -1408Q977 -1408 1153.5 -1305Q1330 -1202 1433 -1025.5Z"/></svg><svg class="fa" viewBox="0.0 -1408.0 1536.0 1536.0" style="left:599.13px;top:8.93px;width:14.74px;height:14.74px;fill:#2d9a3a;stroke:#2d9a3a;stroke-width:21px;"><path d="M1284 -802Q1284 -830 1266 -848L1175 -938Q1156 -957 1130 -957Q1104 -957 1085 -938L677 -531L451 -757Q432 -776 406 -776Q380 -776 361 -757L270 -667Q252 -649 252 -621Q252 -594 270 -576L632 -214Q651 -195 677 -195Q704 -195 723 -214L1266 -757Q1284 -775 1284 -802ZM1433 -1025.5Q1536 -849 1536 -640Q1536 -431 1433 -254.5Q1330 -78 1153.5 25Q977 128 768 128Q559 128 382.5 25Q206 -78 103 -254.5Q0 -431 0 -640Q0 -849 103 -1025.5Q206 -1202 382.5 -1305Q559 -1408 768 -1408Q977 -1408 1153.5 -1305Q1330 -1202 1433 -1025.5Z"/></svg><svg class="fa" viewBox="0.0 -1408.0 1536.0 1536.0" style="left:618.38px;top:8.93px;width:14.74px;height:14.74px;fill:#e0636a;stroke:#e0636a;stroke-width:21px;"><path d="M1041 -1111Q916 -1184 768 -1184Q620 -1184 495 -1111Q370 -1038 297 -913Q224 -788 224 -640Q224 -492 297 -367Q370 -242 495 -169Q620 -96 768 -96Q916 -96 1041 -169Q1166 -242 1239 -367Q1312 -492 1312 -640Q1312 -788 1239 -913Q1166 -1038 1041 -1111ZM1433 -1025.5Q1536 -849 1536 -640Q1536 -431 1433 -254.5Q1330 -78 1153.5 25Q977 128 768 128Q559 128 382.5 25Q206 -78 103 -254.5Q0 -431 0 -640Q0 -849 103 -1025.5Q206 -1202 382.5 -1305Q559 -1408 768 -1408Q977 -1408 1153.5 -1305Q1330 -1202 1433 -1025.5Z"/></svg><svg class="fa" viewBox="0.0 -1408.0 1536.0 1536.0" style="left:637.63px;top:8.93px;width:14.74px;height:14.74px;fill:#2d9a3a;stroke:#2d9a3a;stroke-width:21px;"><path d="M1284 -802Q1284 -830 1266 -848L1175 -938Q1156 -957 1130 -957Q1104 -957 1085 -938L677 -531L451 -757Q432 -776 406 -776Q380 -776 361 -757L270 -667Q252 -649 252 -621Q252 -594 270 -576L632 -214Q651 -195 677 -195Q704 -195 723 -214L1266 -757Q1284 -775 1284 -802ZM1433 -1025.5Q1536 -849 1536 -640Q1536 -431 1433 -254.5Q1330 -78 1153.5 25Q977 128 768 128Q559 128 382.5 25Q206 -78 103 -254.5Q0 -431 0 -640Q0 -849 103 -1025.5Q206 -1202 382.5 -1305Q559 -1408 768 -1408Q977 -1408 1153.5 -1305Q1330 -1202 1433 -1025.5Z"/></svg><div class="c" style="left:668.3px">ABC0000000002</div><div class="c" style="left:951.9px">Electronic book text (PDF)</div><div class="c" style="left:1386.7px"><a>AI</a> &nbsp; <a>Onix</a></div></div>
<div class="tr odd" style="top:131.7px"><div class="cb"></div><svg class="fa" viewBox="0.0 -1408.0 1536.0 1536.0" style="left:45.60px;top:8.70px;width:16.00px;height:16.00px;fill:#1c84c6;stroke:#1c84c6;stroke-width:29px;"><path d="M1041 -1111Q916 -1184 768 -1184Q620 -1184 495 -1111Q370 -1038 297 -913Q224 -788 224 -640Q224 -492 297 -367Q370 -242 495 -169Q620 -96 768 -96Q916 -96 1041 -169Q1166 -242 1239 -367Q1312 -492 1312 -640Q1312 -788 1239 -913Q1166 -1038 1041 -1111ZM1433 -1025.5Q1536 -849 1536 -640Q1536 -431 1433 -254.5Q1330 -78 1153.5 25Q977 128 768 128Q559 128 382.5 25Q206 -78 103 -254.5Q0 -431 0 -640Q0 -849 103 -1025.5Q206 -1202 382.5 -1305Q559 -1408 768 -1408Q977 -1408 1153.5 -1305Q1330 -1202 1433 -1025.5Z"/></svg><div class="c" style="left:82.2px"><a>Demonstration Title 1</a></div><svg class="fa" viewBox="0.0 -1408.0 1536.0 1536.0" style="left:560.63px;top:8.93px;width:14.74px;height:14.74px;fill:#e0636a;stroke:#e0636a;stroke-width:21px;"><path d="M1041 -1111Q916 -1184 768 -1184Q620 -1184 495 -1111Q370 -1038 297 -913Q224 -788 224 -640Q224 -492 297 -367Q370 -242 495 -169Q620 -96 768 -96Q916 -96 1041 -169Q1166 -242 1239 -367Q1312 -492 1312 -640Q1312 -788 1239 -913Q1166 -1038 1041 -1111ZM1433 -1025.5Q1536 -849 1536 -640Q1536 -431 1433 -254.5Q1330 -78 1153.5 25Q977 128 768 128Q559 128 382.5 25Q206 -78 103 -254.5Q0 -431 0 -640Q0 -849 103 -1025.5Q206 -1202 382.5 -1305Q559 -1408 768 -1408Q977 -1408 1153.5 -1305Q1330 -1202 1433 -1025.5Z"/></svg><svg class="fa" viewBox="0.0 -1408.0 1536.0 1536.0" style="left:579.88px;top:8.93px;width:14.74px;height:14.74px;fill:#e0636a;stroke:#e0636a;stroke-width:21px;"><path d="M1041 -1111Q916 -1184 768 -1184Q620 -1184 495 -1111Q370 -1038 297 -913Q224 -788 224 -640Q224 -492 297 -367Q370 -242 495 -169Q620 -96 768 -96Q916 -96 1041 -169Q1166 -242 1239 -367Q1312 -492 1312 -640Q1312 -788 1239 -913Q1166 -1038 1041 -1111ZM1433 -1025.5Q1536 -849 1536 -640Q1536 -431 1433 -254.5Q1330 -78 1153.5 25Q977 128 768 128Q559 128 382.5 25Q206 -78 103 -254.5Q0 -431 0 -640Q0 -849 103 -1025.5Q206 -1202 382.5 -1305Q559 -1408 768 -1408Q977 -1408 1153.5 -1305Q1330 -1202 1433 -1025.5Z"/></svg><svg class="fa" viewBox="0.0 -1408.0 1536.0 1536.0" style="left:599.13px;top:8.93px;width:14.74px;height:14.74px;fill:#2d9a3a;stroke:#2d9a3a;stroke-width:21px;"><path d="M1284 -802Q1284 -830 1266 -848L1175 -938Q1156 -957 1130 -957Q1104 -957 1085 -938L677 -531L451 -757Q432 -776 406 -776Q380 -776 361 -757L270 -667Q252 -649 252 -621Q252 -594 270 -576L632 -214Q651 -195 677 -195Q704 -195 723 -214L1266 -757Q1284 -775 1284 -802ZM1433 -1025.5Q1536 -849 1536 -640Q1536 -431 1433 -254.5Q1330 -78 1153.5 25Q977 128 768 128Q559 128 382.5 25Q206 -78 103 -254.5Q0 -431 0 -640Q0 -849 103 -1025.5Q206 -1202 382.5 -1305Q559 -1408 768 -1408Q977 -1408 1153.5 -1305Q1330 -1202 1433 -1025.5Z"/></svg><svg class="fa" viewBox="0.0 -1408.0 1536.0 1536.0" style="left:618.38px;top:8.93px;width:14.74px;height:14.74px;fill:#e0636a;stroke:#e0636a;stroke-width:21px;"><path d="M1041 -1111Q916 -1184 768 -1184Q620 -1184 495 -1111Q370 -1038 297 -913Q224 -788 224 -640Q224 -492 297 -367Q370 -242 495 -169Q620 -96 768 -96Q916 -96 1041 -169Q1166 -242 1239 -367Q1312 -492 1312 -640Q1312 -788 1239 -913Q1166 -1038 1041 -1111ZM1433 -1025.5Q1536 -849 1536 -640Q1536 -431 1433 -254.5Q1330 -78 1153.5 25Q977 128 768 128Q559 128 382.5 25Q206 -78 103 -254.5Q0 -431 0 -640Q0 -849 103 -1025.5Q206 -1202 382.5 -1305Q559 -1408 768 -1408Q977 -1408 1153.5 -1305Q1330 -1202 1433 -1025.5Z"/></svg><svg class="fa" viewBox="0.0 -1408.0 1536.0 1536.0" style="left:637.63px;top:8.93px;width:14.74px;height:14.74px;fill:#2d9a3a;stroke:#2d9a3a;stroke-width:21px;"><path d="M1284 -802Q1284 -830 1266 -848L1175 -938Q1156 -957 1130 -957Q1104 -957 1085 -938L677 -531L451 -757Q432 -776 406 -776Q380 -776 361 -757L270 -667Q252 -649 252 -621Q252 -594 270 -576L632 -214Q651 -195 677 -195Q704 -195 723 -214L1266 -757Q1284 -775 1284 -802ZM1433 -1025.5Q1536 -849 1536 -640Q1536 -431 1433 -254.5Q1330 -78 1153.5 25Q977 128 768 128Q559 128 382.5 25Q206 -78 103 -254.5Q0 -431 0 -640Q0 -849 103 -1025.5Q206 -1202 382.5 -1305Q559 -1408 768 -1408Q977 -1408 1153.5 -1305Q1330 -1202 1433 -1025.5Z"/></svg><div class="c" style="left:668.3px">ABC0000000003</div><div class="c" style="left:951.9px">Electronic book text (EPUB)</div><div class="c" style="left:1386.7px"><a>AI</a> &nbsp; <a>Onix</a></div></div>
<div class="tr " style="top:168.7px"><div class="cb"></div><svg class="fa" viewBox="0.0 -1408.0 1536.0 1536.0" style="left:45.60px;top:8.70px;width:16.00px;height:16.00px;fill:#1c84c6;stroke:#1c84c6;stroke-width:29px;"><path d="M1041 -1111Q916 -1184 768 -1184Q620 -1184 495 -1111Q370 -1038 297 -913Q224 -788 224 -640Q224 -492 297 -367Q370 -242 495 -169Q620 -96 768 -96Q916 -96 1041 -169Q1166 -242 1239 -367Q1312 -492 1312 -640Q1312 -788 1239 -913Q1166 -1038 1041 -1111ZM1433 -1025.5Q1536 -849 1536 -640Q1536 -431 1433 -254.5Q1330 -78 1153.5 25Q977 128 768 128Q559 128 382.5 25Q206 -78 103 -254.5Q0 -431 0 -640Q0 -849 103 -1025.5Q206 -1202 382.5 -1305Q559 -1408 768 -1408Q977 -1408 1153.5 -1305Q1330 -1202 1433 -1025.5Z"/></svg><div class="c" style="left:82.2px"><a>Demonstration Title 10</a></div><svg class="fa" viewBox="0.0 -1408.0 1536.0 1536.0" style="left:560.63px;top:8.93px;width:14.74px;height:14.74px;fill:#e0636a;stroke:#e0636a;stroke-width:21px;"><path d="M1041 -1111Q916 -1184 768 -1184Q620 -1184 495 -1111Q370 -1038 297 -913Q224 -788 224 -640Q224 -492 297 -367Q370 -242 495 -169Q620 -96 768 -96Q916 -96 1041 -169Q1166 -242 1239 -367Q1312 -492 1312 -640Q1312 -788 1239 -913Q1166 -1038 1041 -1111ZM1433 -1025.5Q1536 -849 1536 -640Q1536 -431 1433 -254.5Q1330 -78 1153.5 25Q977 128 768 128Q559 128 382.5 25Q206 -78 103 -254.5Q0 -431 0 -640Q0 -849 103 -1025.5Q206 -1202 382.5 -1305Q559 -1408 768 -1408Q977 -1408 1153.5 -1305Q1330 -1202 1433 -1025.5Z"/></svg><svg class="fa" viewBox="0.0 -1408.0 1536.0 1536.0" style="left:579.88px;top:8.93px;width:14.74px;height:14.74px;fill:#e0636a;stroke:#e0636a;stroke-width:21px;"><path d="M1041 -1111Q916 -1184 768 -1184Q620 -1184 495 -1111Q370 -1038 297 -913Q224 -788 224 -640Q224 -492 297 -367Q370 -242 495 -169Q620 -96 768 -96Q916 -96 1041 -169Q1166 -242 1239 -367Q1312 -492 1312 -640Q1312 -788 1239 -913Q1166 -1038 1041 -1111ZM1433 -1025.5Q1536 -849 1536 -640Q1536 -431 1433 -254.5Q1330 -78 1153.5 25Q977 128 768 128Q559 128 382.5 25Q206 -78 103 -254.5Q0 -431 0 -640Q0 -849 103 -1025.5Q206 -1202 382.5 -1305Q559 -1408 768 -1408Q977 -1408 1153.5 -1305Q1330 -1202 1433 -1025.5Z"/></svg><svg class="fa" viewBox="0.0 -1408.0 1536.0 1536.0" style="left:599.13px;top:8.93px;width:14.74px;height:14.74px;fill:#2d9a3a;stroke:#2d9a3a;stroke-width:21px;"><path d="M1284 -802Q1284 -830 1266 -848L1175 -938Q1156 -957 1130 -957Q1104 -957 1085 -938L677 -531L451 -757Q432 -776 406 -776Q380 -776 361 -757L270 -667Q252 -649 252 -621Q252 -594 270 -576L632 -214Q651 -195 677 -195Q704 -195 723 -214L1266 -757Q1284 -775 1284 -802ZM1433 -1025.5Q1536 -849 1536 -640Q1536 -431 1433 -254.5Q1330 -78 1153.5 25Q977 128 768 128Q559 128 382.5 25Q206 -78 103 -254.5Q0 -431 0 -640Q0 -849 103 -1025.5Q206 -1202 382.5 -1305Q559 -1408 768 -1408Q977 -1408 1153.5 -1305Q1330 -1202 1433 -1025.5Z"/></svg><svg class="fa" viewBox="0.0 -1408.0 1536.0 1536.0" style="left:618.38px;top:8.93px;width:14.74px;height:14.74px;fill:#e0636a;stroke:#e0636a;stroke-width:21px;"><path d="M1041 -1111Q916 -1184 768 -1184Q620 -1184 495 -1111Q370 -1038 297 -913Q224 -788 224 -640Q224 -492 297 -367Q370 -242 495 -169Q620 -96 768 -96Q916 -96 1041 -169Q1166 -242 1239 -367Q1312 -492 1312 -640Q1312 -788 1239 -913Q1166 -1038 1041 -1111ZM1433 -1025.5Q1536 -849 1536 -640Q1536 -431 1433 -254.5Q1330 -78 1153.5 25Q977 128 768 128Q559 128 382.5 25Q206 -78 103 -254.5Q0 -431 0 -640Q0 -849 103 -1025.5Q206 -1202 382.5 -1305Q559 -1408 768 -1408Q977 -1408 1153.5 -1305Q1330 -1202 1433 -1025.5Z"/></svg><svg class="fa" viewBox="0.0 -1408.0 1536.0 1536.0" style="left:637.63px;top:8.93px;width:14.74px;height:14.74px;fill:#2d9a3a;stroke:#2d9a3a;stroke-width:21px;"><path d="M1284 -802Q1284 -830 1266 -848L1175 -938Q1156 -957 1130 -957Q1104 -957 1085 -938L677 -531L451 -757Q432 -776 406 -776Q380 -776 361 -757L270 -667Q252 -649 252 -621Q252 -594 270 -576L632 -214Q651 -195 677 -195Q704 -195 723 -214L1266 -757Q1284 -775 1284 -802ZM1433 -1025.5Q1536 -849 1536 -640Q1536 -431 1433 -254.5Q1330 -78 1153.5 25Q977 128 768 128Q559 128 382.5 25Q206 -78 103 -254.5Q0 -431 0 -640Q0 -849 103 -1025.5Q206 -1202 382.5 -1305Q559 -1408 768 -1408Q977 -1408 1153.5 -1305Q1330 -1202 1433 -1025.5Z"/></svg><div class="c" style="left:668.3px">ABC0000000023</div><div class="c" style="left:951.9px">Hardback</div><div class="c" style="left:1386.7px"><a>AI</a> &nbsp; <a>Onix</a></div></div>
<div class="tr odd" style="top:205.7px"><div class="cb"></div><svg class="fa" viewBox="0.0 -1408.0 1536.0 1536.0" style="left:45.60px;top:8.70px;width:16.00px;height:16.00px;fill:#1c84c6;stroke:#1c84c6;stroke-width:29px;"><path d="M1041 -1111Q916 -1184 768 -1184Q620 -1184 495 -1111Q370 -1038 297 -913Q224 -788 224 -640Q224 -492 297 -367Q370 -242 495 -169Q620 -96 768 -96Q916 -96 1041 -169Q1166 -242 1239 -367Q1312 -492 1312 -640Q1312 -788 1239 -913Q1166 -1038 1041 -1111ZM1433 -1025.5Q1536 -849 1536 -640Q1536 -431 1433 -254.5Q1330 -78 1153.5 25Q977 128 768 128Q559 128 382.5 25Q206 -78 103 -254.5Q0 -431 0 -640Q0 -849 103 -1025.5Q206 -1202 382.5 -1305Q559 -1408 768 -1408Q977 -1408 1153.5 -1305Q1330 -1202 1433 -1025.5Z"/></svg><div class="c" style="left:82.2px"><a>Demonstration Title 11</a></div><svg class="fa" viewBox="0.0 -1408.0 1536.0 1536.0" style="left:560.63px;top:8.93px;width:14.74px;height:14.74px;fill:#e0636a;stroke:#e0636a;stroke-width:21px;"><path d="M1041 -1111Q916 -1184 768 -1184Q620 -1184 495 -1111Q370 -1038 297 -913Q224 -788 224 -640Q224 -492 297 -367Q370 -242 495 -169Q620 -96 768 -96Q916 -96 1041 -169Q1166 -242 1239 -367Q1312 -492 1312 -640Q1312 -788 1239 -913Q1166 -1038 1041 -1111ZM1433 -1025.5Q1536 -849 1536 -640Q1536 -431 1433 -254.5Q1330 -78 1153.5 25Q977 128 768 128Q559 128 382.5 25Q206 -78 103 -254.5Q0 -431 0 -640Q0 -849 103 -1025.5Q206 -1202 382.5 -1305Q559 -1408 768 -1408Q977 -1408 1153.5 -1305Q1330 -1202 1433 -1025.5Z"/></svg><svg class="fa" viewBox="0.0 -1408.0 1536.0 1536.0" style="left:579.88px;top:8.93px;width:14.74px;height:14.74px;fill:#e0636a;stroke:#e0636a;stroke-width:21px;"><path d="M1041 -1111Q916 -1184 768 -1184Q620 -1184 495 -1111Q370 -1038 297 -913Q224 -788 224 -640Q224 -492 297 -367Q370 -242 495 -169Q620 -96 768 -96Q916 -96 1041 -169Q1166 -242 1239 -367Q1312 -492 1312 -640Q1312 -788 1239 -913Q1166 -1038 1041 -1111ZM1433 -1025.5Q1536 -849 1536 -640Q1536 -431 1433 -254.5Q1330 -78 1153.5 25Q977 128 768 128Q559 128 382.5 25Q206 -78 103 -254.5Q0 -431 0 -640Q0 -849 103 -1025.5Q206 -1202 382.5 -1305Q559 -1408 768 -1408Q977 -1408 1153.5 -1305Q1330 -1202 1433 -1025.5Z"/></svg><svg class="fa" viewBox="0.0 -1408.0 1536.0 1536.0" style="left:599.13px;top:8.93px;width:14.74px;height:14.74px;fill:#2d9a3a;stroke:#2d9a3a;stroke-width:21px;"><path d="M1284 -802Q1284 -830 1266 -848L1175 -938Q1156 -957 1130 -957Q1104 -957 1085 -938L677 -531L451 -757Q432 -776 406 -776Q380 -776 361 -757L270 -667Q252 -649 252 -621Q252 -594 270 -576L632 -214Q651 -195 677 -195Q704 -195 723 -214L1266 -757Q1284 -775 1284 -802ZM1433 -1025.5Q1536 -849 1536 -640Q1536 -431 1433 -254.5Q1330 -78 1153.5 25Q977 128 768 128Q559 128 382.5 25Q206 -78 103 -254.5Q0 -431 0 -640Q0 -849 103 -1025.5Q206 -1202 382.5 -1305Q559 -1408 768 -1408Q977 -1408 1153.5 -1305Q1330 -1202 1433 -1025.5Z"/></svg><svg class="fa" viewBox="0.0 -1408.0 1536.0 1536.0" style="left:618.38px;top:8.93px;width:14.74px;height:14.74px;fill:#e0636a;stroke:#e0636a;stroke-width:21px;"><path d="M1041 -1111Q916 -1184 768 -1184Q620 -1184 495 -1111Q370 -1038 297 -913Q224 -788 224 -640Q224 -492 297 -367Q370 -242 495 -169Q620 -96 768 -96Q916 -96 1041 -169Q1166 -242 1239 -367Q1312 -492 1312 -640Q1312 -788 1239 -913Q1166 -1038 1041 -1111ZM1433 -1025.5Q1536 -849 1536 -640Q1536 -431 1433 -254.5Q1330 -78 1153.5 25Q977 128 768 128Q559 128 382.5 25Q206 -78 103 -254.5Q0 -431 0 -640Q0 -849 103 -1025.5Q206 -1202 382.5 -1305Q559 -1408 768 -1408Q977 -1408 1153.5 -1305Q1330 -1202 1433 -1025.5Z"/></svg><svg class="fa" viewBox="0.0 -1408.0 1536.0 1536.0" style="left:637.63px;top:8.93px;width:14.74px;height:14.74px;fill:#2d9a3a;stroke:#2d9a3a;stroke-width:21px;"><path d="M1284 -802Q1284 -830 1266 -848L1175 -938Q1156 -957 1130 -957Q1104 -957 1085 -938L677 -531L451 -757Q432 -776 406 -776Q380 -776 361 -757L270 -667Q252 -649 252 -621Q252 -594 270 -576L632 -214Q651 -195 677 -195Q704 -195 723 -214L1266 -757Q1284 -775 1284 -802ZM1433 -1025.5Q1536 -849 1536 -640Q1536 -431 1433 -254.5Q1330 -78 1153.5 25Q977 128 768 128Q559 128 382.5 25Q206 -78 103 -254.5Q0 -431 0 -640Q0 -849 103 -1025.5Q206 -1202 382.5 -1305Q559 -1408 768 -1408Q977 -1408 1153.5 -1305Q1330 -1202 1433 -1025.5Z"/></svg><div class="c" style="left:668.3px">ABC0000000024</div><div class="c" style="left:951.9px">Hardback</div><div class="c" style="left:1386.7px"><a>AI</a> &nbsp; <a>Onix</a></div></div>
<div class="tr " style="top:242.7px"><div class="cb"></div><svg class="fa" viewBox="0.0 -1408.0 1536.0 1536.0" style="left:45.60px;top:8.70px;width:16.00px;height:16.00px;fill:#1c84c6;stroke:#1c84c6;stroke-width:29px;"><path d="M1041 -1111Q916 -1184 768 -1184Q620 -1184 495 -1111Q370 -1038 297 -913Q224 -788 224 -640Q224 -492 297 -367Q370 -242 495 -169Q620 -96 768 -96Q916 -96 1041 -169Q1166 -242 1239 -367Q1312 -492 1312 -640Q1312 -788 1239 -913Q1166 -1038 1041 -1111ZM1433 -1025.5Q1536 -849 1536 -640Q1536 -431 1433 -254.5Q1330 -78 1153.5 25Q977 128 768 128Q559 128 382.5 25Q206 -78 103 -254.5Q0 -431 0 -640Q0 -849 103 -1025.5Q206 -1202 382.5 -1305Q559 -1408 768 -1408Q977 -1408 1153.5 -1305Q1330 -1202 1433 -1025.5Z"/></svg><div class="c" style="left:82.2px"><a>Demonstration Title 11</a></div><svg class="fa" viewBox="0.0 -1408.0 1536.0 1536.0" style="left:560.63px;top:8.93px;width:14.74px;height:14.74px;fill:#e0636a;stroke:#e0636a;stroke-width:21px;"><path d="M1041 -1111Q916 -1184 768 -1184Q620 -1184 495 -1111Q370 -1038 297 -913Q224 -788 224 -640Q224 -492 297 -367Q370 -242 495 -169Q620 -96 768 -96Q916 -96 1041 -169Q1166 -242 1239 -367Q1312 -492 1312 -640Q1312 -788 1239 -913Q1166 -1038 1041 -1111ZM1433 -1025.5Q1536 -849 1536 -640Q1536 -431 1433 -254.5Q1330 -78 1153.5 25Q977 128 768 128Q559 128 382.5 25Q206 -78 103 -254.5Q0 -431 0 -640Q0 -849 103 -1025.5Q206 -1202 382.5 -1305Q559 -1408 768 -1408Q977 -1408 1153.5 -1305Q1330 -1202 1433 -1025.5Z"/></svg><svg class="fa" viewBox="0.0 -1408.0 1536.0 1536.0" style="left:579.88px;top:8.93px;width:14.74px;height:14.74px;fill:#e0636a;stroke:#e0636a;stroke-width:21px;"><path d="M1041 -1111Q916 -1184 768 -1184Q620 -1184 495 -1111Q370 -1038 297 -913Q224 -788 224 -640Q224 -492 297 -367Q370 -242 495 -169Q620 -96 768 -96Q916 -96 1041 -169Q1166 -242 1239 -367Q1312 -492 1312 -640Q1312 -788 1239 -913Q1166 -1038 1041 -1111ZM1433 -1025.5Q1536 -849 1536 -640Q1536 -431 1433 -254.5Q1330 -78 1153.5 25Q977 128 768 128Q559 128 382.5 25Q206 -78 103 -254.5Q0 -431 0 -640Q0 -849 103 -1025.5Q206 -1202 382.5 -1305Q559 -1408 768 -1408Q977 -1408 1153.5 -1305Q1330 -1202 1433 -1025.5Z"/></svg><svg class="fa" viewBox="0.0 -1408.0 1536.0 1536.0" style="left:599.13px;top:8.93px;width:14.74px;height:14.74px;fill:#2d9a3a;stroke:#2d9a3a;stroke-width:21px;"><path d="M1284 -802Q1284 -830 1266 -848L1175 -938Q1156 -957 1130 -957Q1104 -957 1085 -938L677 -531L451 -757Q432 -776 406 -776Q380 -776 361 -757L270 -667Q252 -649 252 -621Q252 -594 270 -576L632 -214Q651 -195 677 -195Q704 -195 723 -214L1266 -757Q1284 -775 1284 -802ZM1433 -1025.5Q1536 -849 1536 -640Q1536 -431 1433 -254.5Q1330 -78 1153.5 25Q977 128 768 128Q559 128 382.5 25Q206 -78 103 -254.5Q0 -431 0 -640Q0 -849 103 -1025.5Q206 -1202 382.5 -1305Q559 -1408 768 -1408Q977 -1408 1153.5 -1305Q1330 -1202 1433 -1025.5Z"/></svg><svg class="fa" viewBox="0.0 -1408.0 1536.0 1536.0" style="left:618.38px;top:8.93px;width:14.74px;height:14.74px;fill:#e0636a;stroke:#e0636a;stroke-width:21px;"><path d="M1041 -1111Q916 -1184 768 -1184Q620 -1184 495 -1111Q370 -1038 297 -913Q224 -788 224 -640Q224 -492 297 -367Q370 -242 495 -169Q620 -96 768 -96Q916 -96 1041 -169Q1166 -242 1239 -367Q1312 -492 1312 -640Q1312 -788 1239 -913Q1166 -1038 1041 -1111ZM1433 -1025.5Q1536 -849 1536 -640Q1536 -431 1433 -254.5Q1330 -78 1153.5 25Q977 128 768 128Q559 128 382.5 25Q206 -78 103 -254.5Q0 -431 0 -640Q0 -849 103 -1025.5Q206 -1202 382.5 -1305Q559 -1408 768 -1408Q977 -1408 1153.5 -1305Q1330 -1202 1433 -1025.5Z"/></svg><svg class="fa" viewBox="0.0 -1408.0 1536.0 1536.0" style="left:637.63px;top:8.93px;width:14.74px;height:14.74px;fill:#2d9a3a;stroke:#2d9a3a;stroke-width:21px;"><path d="M1284 -802Q1284 -830 1266 -848L1175 -938Q1156 -957 1130 -957Q1104 -957 1085 -938L677 -531L451 -757Q432 -776 406 -776Q380 -776 361 -757L270 -667Q252 -649 252 -621Q252 -594 270 -576L632 -214Q651 -195 677 -195Q704 -195 723 -214L1266 -757Q1284 -775 1284 -802ZM1433 -1025.5Q1536 -849 1536 -640Q1536 -431 1433 -254.5Q1330 -78 1153.5 25Q977 128 768 128Q559 128 382.5 25Q206 -78 103 -254.5Q0 -431 0 -640Q0 -849 103 -1025.5Q206 -1202 382.5 -1305Q559 -1408 768 -1408Q977 -1408 1153.5 -1305Q1330 -1202 1433 -1025.5Z"/></svg><div class="c" style="left:668.3px">ABC0000000025</div><div class="c" style="left:951.9px">Electronic book text (Kindle)</div><div class="c" style="left:1386.7px"><a>AI</a> &nbsp; <a>Onix</a></div></div>
<div class="tr odd" style="top:279.7px"><div class="cb"></div><svg class="fa" viewBox="0.0 -1408.0 1536.0 1536.0" style="left:45.60px;top:8.70px;width:16.00px;height:16.00px;fill:#1c84c6;stroke:#1c84c6;stroke-width:29px;"><path d="M1041 -1111Q916 -1184 768 -1184Q620 -1184 495 -1111Q370 -1038 297 -913Q224 -788 224 -640Q224 -492 297 -367Q370 -242 495 -169Q620 -96 768 -96Q916 -96 1041 -169Q1166 -242 1239 -367Q1312 -492 1312 -640Q1312 -788 1239 -913Q1166 -1038 1041 -1111ZM1433 -1025.5Q1536 -849 1536 -640Q1536 -431 1433 -254.5Q1330 -78 1153.5 25Q977 128 768 128Q559 128 382.5 25Q206 -78 103 -254.5Q0 -431 0 -640Q0 -849 103 -1025.5Q206 -1202 382.5 -1305Q559 -1408 768 -1408Q977 -1408 1153.5 -1305Q1330 -1202 1433 -1025.5Z"/></svg><div class="c" style="left:82.2px"><a>Demonstration Title 11</a></div><svg class="fa" viewBox="0.0 -1408.0 1536.0 1536.0" style="left:560.63px;top:8.93px;width:14.74px;height:14.74px;fill:#e0636a;stroke:#e0636a;stroke-width:21px;"><path d="M1041 -1111Q916 -1184 768 -1184Q620 -1184 495 -1111Q370 -1038 297 -913Q224 -788 224 -640Q224 -492 297 -367Q370 -242 495 -169Q620 -96 768 -96Q916 -96 1041 -169Q1166 -242 1239 -367Q1312 -492 1312 -640Q1312 -788 1239 -913Q1166 -1038 1041 -1111ZM1433 -1025.5Q1536 -849 1536 -640Q1536 -431 1433 -254.5Q1330 -78 1153.5 25Q977 128 768 128Q559 128 382.5 25Q206 -78 103 -254.5Q0 -431 0 -640Q0 -849 103 -1025.5Q206 -1202 382.5 -1305Q559 -1408 768 -1408Q977 -1408 1153.5 -1305Q1330 -1202 1433 -1025.5Z"/></svg><svg class="fa" viewBox="0.0 -1408.0 1536.0 1536.0" style="left:579.88px;top:8.93px;width:14.74px;height:14.74px;fill:#e0636a;stroke:#e0636a;stroke-width:21px;"><path d="M1041 -1111Q916 -1184 768 -1184Q620 -1184 495 -1111Q370 -1038 297 -913Q224 -788 224 -640Q224 -492 297 -367Q370 -242 495 -169Q620 -96 768 -96Q916 -96 1041 -169Q1166 -242 1239 -367Q1312 -492 1312 -640Q1312 -788 1239 -913Q1166 -1038 1041 -1111ZM1433 -1025.5Q1536 -849 1536 -640Q1536 -431 1433 -254.5Q1330 -78 1153.5 25Q977 128 768 128Q559 128 382.5 25Q206 -78 103 -254.5Q0 -431 0 -640Q0 -849 103 -1025.5Q206 -1202 382.5 -1305Q559 -1408 768 -1408Q977 -1408 1153.5 -1305Q1330 -1202 1433 -1025.5Z"/></svg><svg class="fa" viewBox="0.0 -1408.0 1536.0 1536.0" style="left:599.13px;top:8.93px;width:14.74px;height:14.74px;fill:#2d9a3a;stroke:#2d9a3a;stroke-width:21px;"><path d="M1284 -802Q1284 -830 1266 -848L1175 -938Q1156 -957 1130 -957Q1104 -957 1085 -938L677 -531L451 -757Q432 -776 406 -776Q380 -776 361 -757L270 -667Q252 -649 252 -621Q252 -594 270 -576L632 -214Q651 -195 677 -195Q704 -195 723 -214L1266 -757Q1284 -775 1284 -802ZM1433 -1025.5Q1536 -849 1536 -640Q1536 -431 1433 -254.5Q1330 -78 1153.5 25Q977 128 768 128Q559 128 382.5 25Q206 -78 103 -254.5Q0 -431 0 -640Q0 -849 103 -1025.5Q206 -1202 382.5 -1305Q559 -1408 768 -1408Q977 -1408 1153.5 -1305Q1330 -1202 1433 -1025.5Z"/></svg><svg class="fa" viewBox="0.0 -1408.0 1536.0 1536.0" style="left:618.38px;top:8.93px;width:14.74px;height:14.74px;fill:#e0636a;stroke:#e0636a;stroke-width:21px;"><path d="M1041 -1111Q916 -1184 768 -1184Q620 -1184 495 -1111Q370 -1038 297 -913Q224 -788 224 -640Q224 -492 297 -367Q370 -242 495 -169Q620 -96 768 -96Q916 -96 1041 -169Q1166 -242 1239 -367Q1312 -492 1312 -640Q1312 -788 1239 -913Q1166 -1038 1041 -1111ZM1433 -1025.5Q1536 -849 1536 -640Q1536 -431 1433 -254.5Q1330 -78 1153.5 25Q977 128 768 128Q559 128 382.5 25Q206 -78 103 -254.5Q0 -431 0 -640Q0 -849 103 -1025.5Q206 -1202 382.5 -1305Q559 -1408 768 -1408Q977 -1408 1153.5 -1305Q1330 -1202 1433 -1025.5Z"/></svg><svg class="fa" viewBox="0.0 -1408.0 1536.0 1536.0" style="left:637.63px;top:8.93px;width:14.74px;height:14.74px;fill:#2d9a3a;stroke:#2d9a3a;stroke-width:21px;"><path d="M1284 -802Q1284 -830 1266 -848L1175 -938Q1156 -957 1130 -957Q1104 -957 1085 -938L677 -531L451 -757Q432 -776 406 -776Q380 -776 361 -757L270 -667Q252 -649 252 -621Q252 -594 270 -576L632 -214Q651 -195 677 -195Q704 -195 723 -214L1266 -757Q1284 -775 1284 -802ZM1433 -1025.5Q1536 -849 1536 -640Q1536 -431 1433 -254.5Q1330 -78 1153.5 25Q977 128 768 128Q559 128 382.5 25Q206 -78 103 -254.5Q0 -431 0 -640Q0 -849 103 -1025.5Q206 -1202 382.5 -1305Q559 -1408 768 -1408Q977 -1408 1153.5 -1305Q1330 -1202 1433 -1025.5Z"/></svg><div class="c" style="left:668.3px">ABC0000000029</div><div class="c" style="left:951.9px">Electronic book text (EPUB)</div><div class="c" style="left:1386.7px"><a>AI</a> &nbsp; <a>Onix</a></div></div>
<div class="tr " style="top:316.7px"><div class="cb"></div><svg class="fa" viewBox="0.0 -1408.0 1536.0 1536.0" style="left:45.60px;top:8.70px;width:16.00px;height:16.00px;fill:#1c84c6;stroke:#1c84c6;stroke-width:29px;"><path d="M1041 -1111Q916 -1184 768 -1184Q620 -1184 495 -1111Q370 -1038 297 -913Q224 -788 224 -640Q224 -492 297 -367Q370 -242 495 -169Q620 -96 768 -96Q916 -96 1041 -169Q1166 -242 1239 -367Q1312 -492 1312 -640Q1312 -788 1239 -913Q1166 -1038 1041 -1111ZM1433 -1025.5Q1536 -849 1536 -640Q1536 -431 1433 -254.5Q1330 -78 1153.5 25Q977 128 768 128Q559 128 382.5 25Q206 -78 103 -254.5Q0 -431 0 -640Q0 -849 103 -1025.5Q206 -1202 382.5 -1305Q559 -1408 768 -1408Q977 -1408 1153.5 -1305Q1330 -1202 1433 -1025.5Z"/></svg><div class="c" style="left:82.2px"><a>Demonstration Title 11</a></div><svg class="fa" viewBox="0.0 -1408.0 1536.0 1536.0" style="left:560.63px;top:8.93px;width:14.74px;height:14.74px;fill:#e0636a;stroke:#e0636a;stroke-width:21px;"><path d="M1041 -1111Q916 -1184 768 -1184Q620 -1184 495 -1111Q370 -1038 297 -913Q224 -788 224 -640Q224 -492 297 -367Q370 -242 495 -169Q620 -96 768 -96Q916 -96 1041 -169Q1166 -242 1239 -367Q1312 -492 1312 -640Q1312 -788 1239 -913Q1166 -1038 1041 -1111ZM1433 -1025.5Q1536 -849 1536 -640Q1536 -431 1433 -254.5Q1330 -78 1153.5 25Q977 128 768 128Q559 128 382.5 25Q206 -78 103 -254.5Q0 -431 0 -640Q0 -849 103 -1025.5Q206 -1202 382.5 -1305Q559 -1408 768 -1408Q977 -1408 1153.5 -1305Q1330 -1202 1433 -1025.5Z"/></svg><svg class="fa" viewBox="0.0 -1408.0 1536.0 1536.0" style="left:579.88px;top:8.93px;width:14.74px;height:14.74px;fill:#e0636a;stroke:#e0636a;stroke-width:21px;"><path d="M1041 -1111Q916 -1184 768 -1184Q620 -1184 495 -1111Q370 -1038 297 -913Q224 -788 224 -640Q224 -492 297 -367Q370 -242 495 -169Q620 -96 768 -96Q916 -96 1041 -169Q1166 -242 1239 -367Q1312 -492 1312 -640Q1312 -788 1239 -913Q1166 -1038 1041 -1111ZM1433 -1025.5Q1536 -849 1536 -640Q1536 -431 1433 -254.5Q1330 -78 1153.5 25Q977 128 768 128Q559 128 382.5 25Q206 -78 103 -254.5Q0 -431 0 -640Q0 -849 103 -1025.5Q206 -1202 382.5 -1305Q559 -1408 768 -1408Q977 -1408 1153.5 -1305Q1330 -1202 1433 -1025.5Z"/></svg><svg class="fa" viewBox="0.0 -1408.0 1536.0 1536.0" style="left:599.13px;top:8.93px;width:14.74px;height:14.74px;fill:#2d9a3a;stroke:#2d9a3a;stroke-width:21px;"><path d="M1284 -802Q1284 -830 1266 -848L1175 -938Q1156 -957 1130 -957Q1104 -957 1085 -938L677 -531L451 -757Q432 -776 406 -776Q380 -776 361 -757L270 -667Q252 -649 252 -621Q252 -594 270 -576L632 -214Q651 -195 677 -195Q704 -195 723 -214L1266 -757Q1284 -775 1284 -802ZM1433 -1025.5Q1536 -849 1536 -640Q1536 -431 1433 -254.5Q1330 -78 1153.5 25Q977 128 768 128Q559 128 382.5 25Q206 -78 103 -254.5Q0 -431 0 -640Q0 -849 103 -1025.5Q206 -1202 382.5 -1305Q559 -1408 768 -1408Q977 -1408 1153.5 -1305Q1330 -1202 1433 -1025.5Z"/></svg><svg class="fa" viewBox="0.0 -1408.0 1536.0 1536.0" style="left:618.38px;top:8.93px;width:14.74px;height:14.74px;fill:#e0636a;stroke:#e0636a;stroke-width:21px;"><path d="M1041 -1111Q916 -1184 768 -1184Q620 -1184 495 -1111Q370 -1038 297 -913Q224 -788 224 -640Q224 -492 297 -367Q370 -242 495 -169Q620 -96 768 -96Q916 -96 1041 -169Q1166 -242 1239 -367Q1312 -492 1312 -640Q1312 -788 1239 -913Q1166 -1038 1041 -1111ZM1433 -1025.5Q1536 -849 1536 -640Q1536 -431 1433 -254.5Q1330 -78 1153.5 25Q977 128 768 128Q559 128 382.5 25Q206 -78 103 -254.5Q0 -431 0 -640Q0 -849 103 -1025.5Q206 -1202 382.5 -1305Q559 -1408 768 -1408Q977 -1408 1153.5 -1305Q1330 -1202 1433 -1025.5Z"/></svg><svg class="fa" viewBox="0.0 -1408.0 1536.0 1536.0" style="left:637.63px;top:8.93px;width:14.74px;height:14.74px;fill:#2d9a3a;stroke:#2d9a3a;stroke-width:21px;"><path d="M1284 -802Q1284 -830 1266 -848L1175 -938Q1156 -957 1130 -957Q1104 -957 1085 -938L677 -531L451 -757Q432 -776 406 -776Q380 -776 361 -757L270 -667Q252 -649 252 -621Q252 -594 270 -576L632 -214Q651 -195 677 -195Q704 -195 723 -214L1266 -757Q1284 -775 1284 -802ZM1433 -1025.5Q1536 -849 1536 -640Q1536 -431 1433 -254.5Q1330 -78 1153.5 25Q977 128 768 128Q559 128 382.5 25Q206 -78 103 -254.5Q0 -431 0 -640Q0 -849 103 -1025.5Q206 -1202 382.5 -1305Q559 -1408 768 -1408Q977 -1408 1153.5 -1305Q1330 -1202 1433 -1025.5Z"/></svg><div class="c" style="left:668.3px">ABC0000000030</div><div class="c" style="left:951.9px">Electronic book text (PDF)</div><div class="c" style="left:1386.7px"><a>AI</a> &nbsp; <a>Onix</a></div></div>
<div class="tr odd" style="top:353.7px"><div class="cb"></div><svg class="fa" viewBox="0.0 -1408.0 1536.0 1536.0" style="left:45.60px;top:8.70px;width:16.00px;height:16.00px;fill:#1c84c6;stroke:#1c84c6;stroke-width:29px;"><path d="M1041 -1111Q916 -1184 768 -1184Q620 -1184 495 -1111Q370 -1038 297 -913Q224 -788 224 -640Q224 -492 297 -367Q370 -242 495 -169Q620 -96 768 -96Q916 -96 1041 -169Q1166 -242 1239 -367Q1312 -492 1312 -640Q1312 -788 1239 -913Q1166 -1038 1041 -1111ZM1433 -1025.5Q1536 -849 1536 -640Q1536 -431 1433 -254.5Q1330 -78 1153.5 25Q977 128 768 128Q559 128 382.5 25Q206 -78 103 -254.5Q0 -431 0 -640Q0 -849 103 -1025.5Q206 -1202 382.5 -1305Q559 -1408 768 -1408Q977 -1408 1153.5 -1305Q1330 -1202 1433 -1025.5Z"/></svg><div class="c" style="left:82.2px"><a>Demonstration Title 11</a></div><svg class="fa" viewBox="0.0 -1408.0 1536.0 1536.0" style="left:560.63px;top:8.93px;width:14.74px;height:14.74px;fill:#e0636a;stroke:#e0636a;stroke-width:21px;"><path d="M1041 -1111Q916 -1184 768 -1184Q620 -1184 495 -1111Q370 -1038 297 -913Q224 -788 224 -640Q224 -492 297 -367Q370 -242 495 -169Q620 -96 768 -96Q916 -96 1041 -169Q1166 -242 1239 -367Q1312 -492 1312 -640Q1312 -788 1239 -913Q1166 -1038 1041 -1111ZM1433 -1025.5Q1536 -849 1536 -640Q1536 -431 1433 -254.5Q1330 -78 1153.5 25Q977 128 768 128Q559 128 382.5 25Q206 -78 103 -254.5Q0 -431 0 -640Q0 -849 103 -1025.5Q206 -1202 382.5 -1305Q559 -1408 768 -1408Q977 -1408 1153.5 -1305Q1330 -1202 1433 -1025.5Z"/></svg><svg class="fa" viewBox="0.0 -1408.0 1536.0 1536.0" style="left:579.88px;top:8.93px;width:14.74px;height:14.74px;fill:#e0636a;stroke:#e0636a;stroke-width:21px;"><path d="M1041 -1111Q916 -1184 768 -1184Q620 -1184 495 -1111Q370 -1038 297 -913Q224 -788 224 -640Q224 -492 297 -367Q370 -242 495 -169Q620 -96 768 -96Q916 -96 1041 -169Q1166 -242 1239 -367Q1312 -492 1312 -640Q1312 -788 1239 -913Q1166 -1038 1041 -1111ZM1433 -1025.5Q1536 -849 1536 -640Q1536 -431 1433 -254.5Q1330 -78 1153.5 25Q977 128 768 128Q559 128 382.5 25Q206 -78 103 -254.5Q0 -431 0 -640Q0 -849 103 -1025.5Q206 -1202 382.5 -1305Q559 -1408 768 -1408Q977 -1408 1153.5 -1305Q1330 -1202 1433 -1025.5Z"/></svg><svg class="fa" viewBox="0.0 -1408.0 1536.0 1536.0" style="left:599.13px;top:8.93px;width:14.74px;height:14.74px;fill:#2d9a3a;stroke:#2d9a3a;stroke-width:21px;"><path d="M1284 -802Q1284 -830 1266 -848L1175 -938Q1156 -957 1130 -957Q1104 -957 1085 -938L677 -531L451 -757Q432 -776 406 -776Q380 -776 361 -757L270 -667Q252 -649 252 -621Q252 -594 270 -576L632 -214Q651 -195 677 -195Q704 -195 723 -214L1266 -757Q1284 -775 1284 -802ZM1433 -1025.5Q1536 -849 1536 -640Q1536 -431 1433 -254.5Q1330 -78 1153.5 25Q977 128 768 128Q559 128 382.5 25Q206 -78 103 -254.5Q0 -431 0 -640Q0 -849 103 -1025.5Q206 -1202 382.5 -1305Q559 -1408 768 -1408Q977 -1408 1153.5 -1305Q1330 -1202 1433 -1025.5Z"/></svg><svg class="fa" viewBox="0.0 -1408.0 1536.0 1536.0" style="left:618.38px;top:8.93px;width:14.74px;height:14.74px;fill:#e0636a;stroke:#e0636a;stroke-width:21px;"><path d="M1041 -1111Q916 -1184 768 -1184Q620 -1184 495 -1111Q370 -1038 297 -913Q224 -788 224 -640Q224 -492 297 -367Q370 -242 495 -169Q620 -96 768 -96Q916 -96 1041 -169Q1166 -242 1239 -367Q1312 -492 1312 -640Q1312 -788 1239 -913Q1166 -1038 1041 -1111ZM1433 -1025.5Q1536 -849 1536 -640Q1536 -431 1433 -254.5Q1330 -78 1153.5 25Q977 128 768 128Q559 128 382.5 25Q206 -78 103 -254.5Q0 -431 0 -640Q0 -849 103 -1025.5Q206 -1202 382.5 -1305Q559 -1408 768 -1408Q977 -1408 1153.5 -1305Q1330 -1202 1433 -1025.5Z"/></svg><svg class="fa" viewBox="0.0 -1408.0 1536.0 1536.0" style="left:637.63px;top:8.93px;width:14.74px;height:14.74px;fill:#2d9a3a;stroke:#2d9a3a;stroke-width:21px;"><path d="M1284 -802Q1284 -830 1266 -848L1175 -938Q1156 -957 1130 -957Q1104 -957 1085 -938L677 -531L451 -757Q432 -776 406 -776Q380 -776 361 -757L270 -667Q252 -649 252 -621Q252 -594 270 -576L632 -214Q651 -195 677 -195Q704 -195 723 -214L1266 -757Q1284 -775 1284 -802ZM1433 -1025.5Q1536 -849 1536 -640Q1536 -431 1433 -254.5Q1330 -78 1153.5 25Q977 128 768 128Q559 128 382.5 25Q206 -78 103 -254.5Q0 -431 0 -640Q0 -849 103 -1025.5Q206 -1202 382.5 -1305Q559 -1408 768 -1408Q977 -1408 1153.5 -1305Q1330 -1202 1433 -1025.5Z"/></svg><div class="c" style="left:668.3px">ABC0000000035</div><div class="c" style="left:951.9px">Paperback</div><div class="c" style="left:1386.7px"><a>AI</a> &nbsp; <a>Onix</a></div></div>
<div class="tr " style="top:390.7px"><div class="cb"></div><svg class="fa" viewBox="0.0 -1408.0 1536.0 1536.0" style="left:45.60px;top:8.70px;width:16.00px;height:16.00px;fill:#1c84c6;stroke:#1c84c6;stroke-width:29px;"><path d="M1041 -1111Q916 -1184 768 -1184Q620 -1184 495 -1111Q370 -1038 297 -913Q224 -788 224 -640Q224 -492 297 -367Q370 -242 495 -169Q620 -96 768 -96Q916 -96 1041 -169Q1166 -242 1239 -367Q1312 -492 1312 -640Q1312 -788 1239 -913Q1166 -1038 1041 -1111ZM1433 -1025.5Q1536 -849 1536 -640Q1536 -431 1433 -254.5Q1330 -78 1153.5 25Q977 128 768 128Q559 128 382.5 25Q206 -78 103 -254.5Q0 -431 0 -640Q0 -849 103 -1025.5Q206 -1202 382.5 -1305Q559 -1408 768 -1408Q977 -1408 1153.5 -1305Q1330 -1202 1433 -1025.5Z"/></svg><div class="c" style="left:82.2px"><a>Demonstration Title 12</a></div><svg class="fa" viewBox="0.0 -1408.0 1536.0 1536.0" style="left:560.63px;top:8.93px;width:14.74px;height:14.74px;fill:#e0636a;stroke:#e0636a;stroke-width:21px;"><path d="M1041 -1111Q916 -1184 768 -1184Q620 -1184 495 -1111Q370 -1038 297 -913Q224 -788 224 -640Q224 -492 297 -367Q370 -242 495 -169Q620 -96 768 -96Q916 -96 1041 -169Q1166 -242 1239 -367Q1312 -492 1312 -640Q1312 -788 1239 -913Q1166 -1038 1041 -1111ZM1433 -1025.5Q1536 -849 1536 -640Q1536 -431 1433 -254.5Q1330 -78 1153.5 25Q977 128 768 128Q559 128 382.5 25Q206 -78 103 -254.5Q0 -431 0 -640Q0 -849 103 -1025.5Q206 -1202 382.5 -1305Q559 -1408 768 -1408Q977 -1408 1153.5 -1305Q1330 -1202 1433 -1025.5Z"/></svg><svg class="fa" viewBox="0.0 -1408.0 1536.0 1536.0" style="left:579.88px;top:8.93px;width:14.74px;height:14.74px;fill:#e0636a;stroke:#e0636a;stroke-width:21px;"><path d="M1041 -1111Q916 -1184 768 -1184Q620 -1184 495 -1111Q370 -1038 297 -913Q224 -788 224 -640Q224 -492 297 -367Q370 -242 495 -169Q620 -96 768 -96Q916 -96 1041 -169Q1166 -242 1239 -367Q1312 -492 1312 -640Q1312 -788 1239 -913Q1166 -1038 1041 -1111ZM1433 -1025.5Q1536 -849 1536 -640Q1536 -431 1433 -254.5Q1330 -78 1153.5 25Q977 128 768 128Q559 128 382.5 25Q206 -78 103 -254.5Q0 -431 0 -640Q0 -849 103 -1025.5Q206 -1202 382.5 -1305Q559 -1408 768 -1408Q977 -1408 1153.5 -1305Q1330 -1202 1433 -1025.5Z"/></svg><svg class="fa" viewBox="0.0 -1408.0 1536.0 1536.0" style="left:599.13px;top:8.93px;width:14.74px;height:14.74px;fill:#2d9a3a;stroke:#2d9a3a;stroke-width:21px;"><path d="M1284 -802Q1284 -830 1266 -848L1175 -938Q1156 -957 1130 -957Q1104 -957 1085 -938L677 -531L451 -757Q432 -776 406 -776Q380 -776 361 -757L270 -667Q252 -649 252 -621Q252 -594 270 -576L632 -214Q651 -195 677 -195Q704 -195 723 -214L1266 -757Q1284 -775 1284 -802ZM1433 -1025.5Q1536 -849 1536 -640Q1536 -431 1433 -254.5Q1330 -78 1153.5 25Q977 128 768 128Q559 128 382.5 25Q206 -78 103 -254.5Q0 -431 0 -640Q0 -849 103 -1025.5Q206 -1202 382.5 -1305Q559 -1408 768 -1408Q977 -1408 1153.5 -1305Q1330 -1202 1433 -1025.5Z"/></svg><svg class="fa" viewBox="0.0 -1408.0 1536.0 1536.0" style="left:618.38px;top:8.93px;width:14.74px;height:14.74px;fill:#e0636a;stroke:#e0636a;stroke-width:21px;"><path d="M1041 -1111Q916 -1184 768 -1184Q620 -1184 495 -1111Q370 -1038 297 -913Q224 -788 224 -640Q224 -492 297 -367Q370 -242 495 -169Q620 -96 768 -96Q916 -96 1041 -169Q1166 -242 1239 -367Q1312 -492 1312 -640Q1312 -788 1239 -913Q1166 -1038 1041 -1111ZM1433 -1025.5Q1536 -849 1536 -640Q1536 -431 1433 -254.5Q1330 -78 1153.5 25Q977 128 768 128Q559 128 382.5 25Q206 -78 103 -254.5Q0 -431 0 -640Q0 -849 103 -1025.5Q206 -1202 382.5 -1305Q559 -1408 768 -1408Q977 -1408 1153.5 -1305Q1330 -1202 1433 -1025.5Z"/></svg><svg class="fa" viewBox="0.0 -1408.0 1536.0 1536.0" style="left:637.63px;top:8.93px;width:14.74px;height:14.74px;fill:#2d9a3a;stroke:#2d9a3a;stroke-width:21px;"><path d="M1284 -802Q1284 -830 1266 -848L1175 -938Q1156 -957 1130 -957Q1104 -957 1085 -938L677 -531L451 -757Q432 -776 406 -776Q380 -776 361 -757L270 -667Q252 -649 252 -621Q252 -594 270 -576L632 -214Q651 -195 677 -195Q704 -195 723 -214L1266 -757Q1284 -775 1284 -802ZM1433 -1025.5Q1536 -849 1536 -640Q1536 -431 1433 -254.5Q1330 -78 1153.5 25Q977 128 768 128Q559 128 382.5 25Q206 -78 103 -254.5Q0 -431 0 -640Q0 -849 103 -1025.5Q206 -1202 382.5 -1305Q559 -1408 768 -1408Q977 -1408 1153.5 -1305Q1330 -1202 1433 -1025.5Z"/></svg><div class="c" style="left:668.3px">ABC0000000026</div><div class="c" style="left:951.9px">Hardback</div><div class="c" style="left:1386.7px"><a>AI</a> &nbsp; <a>Onix</a></div></div>
<div class="tr odd" style="top:427.7px"><div class="cb"></div><svg class="fa" viewBox="0.0 -1408.0 1536.0 1536.0" style="left:45.60px;top:8.70px;width:16.00px;height:16.00px;fill:#1c84c6;stroke:#1c84c6;stroke-width:29px;"><path d="M1041 -1111Q916 -1184 768 -1184Q620 -1184 495 -1111Q370 -1038 297 -913Q224 -788 224 -640Q224 -492 297 -367Q370 -242 495 -169Q620 -96 768 -96Q916 -96 1041 -169Q1166 -242 1239 -367Q1312 -492 1312 -640Q1312 -788 1239 -913Q1166 -1038 1041 -1111ZM1433 -1025.5Q1536 -849 1536 -640Q1536 -431 1433 -254.5Q1330 -78 1153.5 25Q977 128 768 128Q559 128 382.5 25Q206 -78 103 -254.5Q0 -431 0 -640Q0 -849 103 -1025.5Q206 -1202 382.5 -1305Q559 -1408 768 -1408Q977 -1408 1153.5 -1305Q1330 -1202 1433 -1025.5Z"/></svg><div class="c" style="left:82.2px"><a>Demonstration Title 12</a></div><svg class="fa" viewBox="0.0 -1408.0 1536.0 1536.0" style="left:560.63px;top:8.93px;width:14.74px;height:14.74px;fill:#e0636a;stroke:#e0636a;stroke-width:21px;"><path d="M1041 -1111Q916 -1184 768 -1184Q620 -1184 495 -1111Q370 -1038 297 -913Q224 -788 224 -640Q224 -492 297 -367Q370 -242 495 -169Q620 -96 768 -96Q916 -96 1041 -169Q1166 -242 1239 -367Q1312 -492 1312 -640Q1312 -788 1239 -913Q1166 -1038 1041 -1111ZM1433 -1025.5Q1536 -849 1536 -640Q1536 -431 1433 -254.5Q1330 -78 1153.5 25Q977 128 768 128Q559 128 382.5 25Q206 -78 103 -254.5Q0 -431 0 -640Q0 -849 103 -1025.5Q206 -1202 382.5 -1305Q559 -1408 768 -1408Q977 -1408 1153.5 -1305Q1330 -1202 1433 -1025.5Z"/></svg><svg class="fa" viewBox="0.0 -1408.0 1536.0 1536.0" style="left:579.88px;top:8.93px;width:14.74px;height:14.74px;fill:#e0636a;stroke:#e0636a;stroke-width:21px;"><path d="M1041 -1111Q916 -1184 768 -1184Q620 -1184 495 -1111Q370 -1038 297 -913Q224 -788 224 -640Q224 -492 297 -367Q370 -242 495 -169Q620 -96 768 -96Q916 -96 1041 -169Q1166 -242 1239 -367Q1312 -492 1312 -640Q1312 -788 1239 -913Q1166 -1038 1041 -1111ZM1433 -1025.5Q1536 -849 1536 -640Q1536 -431 1433 -254.5Q1330 -78 1153.5 25Q977 128 768 128Q559 128 382.5 25Q206 -78 103 -254.5Q0 -431 0 -640Q0 -849 103 -1025.5Q206 -1202 382.5 -1305Q559 -1408 768 -1408Q977 -1408 1153.5 -1305Q1330 -1202 1433 -1025.5Z"/></svg><svg class="fa" viewBox="0.0 -1408.0 1536.0 1536.0" style="left:599.13px;top:8.93px;width:14.74px;height:14.74px;fill:#2d9a3a;stroke:#2d9a3a;stroke-width:21px;"><path d="M1284 -802Q1284 -830 1266 -848L1175 -938Q1156 -957 1130 -957Q1104 -957 1085 -938L677 -531L451 -757Q432 -776 406 -776Q380 -776 361 -757L270 -667Q252 -649 252 -621Q252 -594 270 -576L632 -214Q651 -195 677 -195Q704 -195 723 -214L1266 -757Q1284 -775 1284 -802ZM1433 -1025.5Q1536 -849 1536 -640Q1536 -431 1433 -254.5Q1330 -78 1153.5 25Q977 128 768 128Q559 128 382.5 25Q206 -78 103 -254.5Q0 -431 0 -640Q0 -849 103 -1025.5Q206 -1202 382.5 -1305Q559 -1408 768 -1408Q977 -1408 1153.5 -1305Q1330 -1202 1433 -1025.5Z"/></svg><svg class="fa" viewBox="0.0 -1408.0 1536.0 1536.0" style="left:618.38px;top:8.93px;width:14.74px;height:14.74px;fill:#e0636a;stroke:#e0636a;stroke-width:21px;"><path d="M1041 -1111Q916 -1184 768 -1184Q620 -1184 495 -1111Q370 -1038 297 -913Q224 -788 224 -640Q224 -492 297 -367Q370 -242 495 -169Q620 -96 768 -96Q916 -96 1041 -169Q1166 -242 1239 -367Q1312 -492 1312 -640Q1312 -788 1239 -913Q1166 -1038 1041 -1111ZM1433 -1025.5Q1536 -849 1536 -640Q1536 -431 1433 -254.5Q1330 -78 1153.5 25Q977 128 768 128Q559 128 382.5 25Q206 -78 103 -254.5Q0 -431 0 -640Q0 -849 103 -1025.5Q206 -1202 382.5 -1305Q559 -1408 768 -1408Q977 -1408 1153.5 -1305Q1330 -1202 1433 -1025.5Z"/></svg><svg class="fa" viewBox="0.0 -1408.0 1536.0 1536.0" style="left:637.63px;top:8.93px;width:14.74px;height:14.74px;fill:#2d9a3a;stroke:#2d9a3a;stroke-width:21px;"><path d="M1284 -802Q1284 -830 1266 -848L1175 -938Q1156 -957 1130 -957Q1104 -957 1085 -938L677 -531L451 -757Q432 -776 406 -776Q380 -776 361 -757L270 -667Q252 -649 252 -621Q252 -594 270 -576L632 -214Q651 -195 677 -195Q704 -195 723 -214L1266 -757Q1284 -775 1284 -802ZM1433 -1025.5Q1536 -849 1536 -640Q1536 -431 1433 -254.5Q1330 -78 1153.5 25Q977 128 768 128Q559 128 382.5 25Q206 -78 103 -254.5Q0 -431 0 -640Q0 -849 103 -1025.5Q206 -1202 382.5 -1305Q559 -1408 768 -1408Q977 -1408 1153.5 -1305Q1330 -1202 1433 -1025.5Z"/></svg><div class="c" style="left:668.3px">ABC0000000027</div><div class="c" style="left:951.9px">Electronic book text (EPUB)</div><div class="c" style="left:1386.7px"><a>AI</a> &nbsp; <a>Onix</a></div></div>
<div class="tr " style="top:464.7px"><div class="cb"></div><svg class="fa" viewBox="0.0 -1408.0 1536.0 1536.0" style="left:45.60px;top:8.70px;width:16.00px;height:16.00px;fill:#1c84c6;stroke:#1c84c6;stroke-width:29px;"><path d="M1041 -1111Q916 -1184 768 -1184Q620 -1184 495 -1111Q370 -1038 297 -913Q224 -788 224 -640Q224 -492 297 -367Q370 -242 495 -169Q620 -96 768 -96Q916 -96 1041 -169Q1166 -242 1239 -367Q1312 -492 1312 -640Q1312 -788 1239 -913Q1166 -1038 1041 -1111ZM1433 -1025.5Q1536 -849 1536 -640Q1536 -431 1433 -254.5Q1330 -78 1153.5 25Q977 128 768 128Q559 128 382.5 25Q206 -78 103 -254.5Q0 -431 0 -640Q0 -849 103 -1025.5Q206 -1202 382.5 -1305Q559 -1408 768 -1408Q977 -1408 1153.5 -1305Q1330 -1202 1433 -1025.5Z"/></svg><div class="c" style="left:82.2px"><a>Demonstration Title 12</a></div><svg class="fa" viewBox="0.0 -1408.0 1536.0 1536.0" style="left:560.63px;top:8.93px;width:14.74px;height:14.74px;fill:#e0636a;stroke:#e0636a;stroke-width:21px;"><path d="M1041 -1111Q916 -1184 768 -1184Q620 -1184 495 -1111Q370 -1038 297 -913Q224 -788 224 -640Q224 -492 297 -367Q370 -242 495 -169Q620 -96 768 -96Q916 -96 1041 -169Q1166 -242 1239 -367Q1312 -492 1312 -640Q1312 -788 1239 -913Q1166 -1038 1041 -1111ZM1433 -1025.5Q1536 -849 1536 -640Q1536 -431 1433 -254.5Q1330 -78 1153.5 25Q977 128 768 128Q559 128 382.5 25Q206 -78 103 -254.5Q0 -431 0 -640Q0 -849 103 -1025.5Q206 -1202 382.5 -1305Q559 -1408 768 -1408Q977 -1408 1153.5 -1305Q1330 -1202 1433 -1025.5Z"/></svg><svg class="fa" viewBox="0.0 -1408.0 1536.0 1536.0" style="left:579.88px;top:8.93px;width:14.74px;height:14.74px;fill:#e0636a;stroke:#e0636a;stroke-width:21px;"><path d="M1041 -1111Q916 -1184 768 -1184Q620 -1184 495 -1111Q370 -1038 297 -913Q224 -788 224 -640Q224 -492 297 -367Q370 -242 495 -169Q620 -96 768 -96Q916 -96 1041 -169Q1166 -242 1239 -367Q1312 -492 1312 -640Q1312 -788 1239 -913Q1166 -1038 1041 -1111ZM1433 -1025.5Q1536 -849 1536 -640Q1536 -431 1433 -254.5Q1330 -78 1153.5 25Q977 128 768 128Q559 128 382.5 25Q206 -78 103 -254.5Q0 -431 0 -640Q0 -849 103 -1025.5Q206 -1202 382.5 -1305Q559 -1408 768 -1408Q977 -1408 1153.5 -1305Q1330 -1202 1433 -1025.5Z"/></svg><svg class="fa" viewBox="0.0 -1408.0 1536.0 1536.0" style="left:599.13px;top:8.93px;width:14.74px;height:14.74px;fill:#2d9a3a;stroke:#2d9a3a;stroke-width:21px;"><path d="M1284 -802Q1284 -830 1266 -848L1175 -938Q1156 -957 1130 -957Q1104 -957 1085 -938L677 -531L451 -757Q432 -776 406 -776Q380 -776 361 -757L270 -667Q252 -649 252 -621Q252 -594 270 -576L632 -214Q651 -195 677 -195Q704 -195 723 -214L1266 -757Q1284 -775 1284 -802ZM1433 -1025.5Q1536 -849 1536 -640Q1536 -431 1433 -254.5Q1330 -78 1153.5 25Q977 128 768 128Q559 128 382.5 25Q206 -78 103 -254.5Q0 -431 0 -640Q0 -849 103 -1025.5Q206 -1202 382.5 -1305Q559 -1408 768 -1408Q977 -1408 1153.5 -1305Q1330 -1202 1433 -1025.5Z"/></svg><svg class="fa" viewBox="0.0 -1408.0 1536.0 1536.0" style="left:618.38px;top:8.93px;width:14.74px;height:14.74px;fill:#e0636a;stroke:#e0636a;stroke-width:21px;"><path d="M1041 -1111Q916 -1184 768 -1184Q620 -1184 495 -1111Q370 -1038 297 -913Q224 -788 224 -640Q224 -492 297 -367Q370 -242 495 -169Q620 -96 768 -96Q916 -96 1041 -169Q1166 -242 1239 -367Q1312 -492 1312 -640Q1312 -788 1239 -913Q1166 -1038 1041 -1111ZM1433 -1025.5Q1536 -849 1536 -640Q1536 -431 1433 -254.5Q1330 -78 1153.5 25Q977 128 768 128Q559 128 382.5 25Q206 -78 103 -254.5Q0 -431 0 -640Q0 -849 103 -1025.5Q206 -1202 382.5 -1305Q559 -1408 768 -1408Q977 -1408 1153.5 -1305Q1330 -1202 1433 -1025.5Z"/></svg><svg class="fa" viewBox="0.0 -1408.0 1536.0 1536.0" style="left:637.63px;top:8.93px;width:14.74px;height:14.74px;fill:#2d9a3a;stroke:#2d9a3a;stroke-width:21px;"><path d="M1284 -802Q1284 -830 1266 -848L1175 -938Q1156 -957 1130 -957Q1104 -957 1085 -938L677 -531L451 -757Q432 -776 406 -776Q380 -776 361 -757L270 -667Q252 -649 252 -621Q252 -594 270 -576L632 -214Q651 -195 677 -195Q704 -195 723 -214L1266 -757Q1284 -775 1284 -802ZM1433 -1025.5Q1536 -849 1536 -640Q1536 -431 1433 -254.5Q1330 -78 1153.5 25Q977 128 768 128Q559 128 382.5 25Q206 -78 103 -254.5Q0 -431 0 -640Q0 -849 103 -1025.5Q206 -1202 382.5 -1305Q559 -1408 768 -1408Q977 -1408 1153.5 -1305Q1330 -1202 1433 -1025.5Z"/></svg><div class="c" style="left:668.3px">ABC0000000028</div><div class="c" style="left:951.9px">Electronic book text (Kindle)</div><div class="c" style="left:1386.7px"><a>AI</a> &nbsp; <a>Onix</a></div></div>
<div class="tr odd" style="top:501.7px"><div class="cb"></div><svg class="fa" viewBox="0.0 -1408.0 1536.0 1536.0" style="left:45.60px;top:8.70px;width:16.00px;height:16.00px;fill:#1c84c6;stroke:#1c84c6;stroke-width:29px;"><path d="M1041 -1111Q916 -1184 768 -1184Q620 -1184 495 -1111Q370 -1038 297 -913Q224 -788 224 -640Q224 -492 297 -367Q370 -242 495 -169Q620 -96 768 -96Q916 -96 1041 -169Q1166 -242 1239 -367Q1312 -492 1312 -640Q1312 -788 1239 -913Q1166 -1038 1041 -1111ZM1433 -1025.5Q1536 -849 1536 -640Q1536 -431 1433 -254.5Q1330 -78 1153.5 25Q977 128 768 128Q559 128 382.5 25Q206 -78 103 -254.5Q0 -431 0 -640Q0 -849 103 -1025.5Q206 -1202 382.5 -1305Q559 -1408 768 -1408Q977 -1408 1153.5 -1305Q1330 -1202 1433 -1025.5Z"/></svg><div class="c" style="left:82.2px"><a>Demonstration Title 13</a></div><svg class="fa" viewBox="0.0 -1408.0 1536.0 1536.0" style="left:560.63px;top:8.93px;width:14.74px;height:14.74px;fill:#e0636a;stroke:#e0636a;stroke-width:21px;"><path d="M1041 -1111Q916 -1184 768 -1184Q620 -1184 495 -1111Q370 -1038 297 -913Q224 -788 224 -640Q224 -492 297 -367Q370 -242 495 -169Q620 -96 768 -96Q916 -96 1041 -169Q1166 -242 1239 -367Q1312 -492 1312 -640Q1312 -788 1239 -913Q1166 -1038 1041 -1111ZM1433 -1025.5Q1536 -849 1536 -640Q1536 -431 1433 -254.5Q1330 -78 1153.5 25Q977 128 768 128Q559 128 382.5 25Q206 -78 103 -254.5Q0 -431 0 -640Q0 -849 103 -1025.5Q206 -1202 382.5 -1305Q559 -1408 768 -1408Q977 -1408 1153.5 -1305Q1330 -1202 1433 -1025.5Z"/></svg><svg class="fa" viewBox="0.0 -1408.0 1536.0 1536.0" style="left:579.88px;top:8.93px;width:14.74px;height:14.74px;fill:#e0636a;stroke:#e0636a;stroke-width:21px;"><path d="M1041 -1111Q916 -1184 768 -1184Q620 -1184 495 -1111Q370 -1038 297 -913Q224 -788 224 -640Q224 -492 297 -367Q370 -242 495 -169Q620 -96 768 -96Q916 -96 1041 -169Q1166 -242 1239 -367Q1312 -492 1312 -640Q1312 -788 1239 -913Q1166 -1038 1041 -1111ZM1433 -1025.5Q1536 -849 1536 -640Q1536 -431 1433 -254.5Q1330 -78 1153.5 25Q977 128 768 128Q559 128 382.5 25Q206 -78 103 -254.5Q0 -431 0 -640Q0 -849 103 -1025.5Q206 -1202 382.5 -1305Q559 -1408 768 -1408Q977 -1408 1153.5 -1305Q1330 -1202 1433 -1025.5Z"/></svg><svg class="fa" viewBox="0.0 -1408.0 1536.0 1536.0" style="left:599.13px;top:8.93px;width:14.74px;height:14.74px;fill:#2d9a3a;stroke:#2d9a3a;stroke-width:21px;"><path d="M1284 -802Q1284 -830 1266 -848L1175 -938Q1156 -957 1130 -957Q1104 -957 1085 -938L677 -531L451 -757Q432 -776 406 -776Q380 -776 361 -757L270 -667Q252 -649 252 -621Q252 -594 270 -576L632 -214Q651 -195 677 -195Q704 -195 723 -214L1266 -757Q1284 -775 1284 -802ZM1433 -1025.5Q1536 -849 1536 -640Q1536 -431 1433 -254.5Q1330 -78 1153.5 25Q977 128 768 128Q559 128 382.5 25Q206 -78 103 -254.5Q0 -431 0 -640Q0 -849 103 -1025.5Q206 -1202 382.5 -1305Q559 -1408 768 -1408Q977 -1408 1153.5 -1305Q1330 -1202 1433 -1025.5Z"/></svg><svg class="fa" viewBox="0.0 -1408.0 1536.0 1536.0" style="left:618.38px;top:8.93px;width:14.74px;height:14.74px;fill:#e0636a;stroke:#e0636a;stroke-width:21px;"><path d="M1041 -1111Q916 -1184 768 -1184Q620 -1184 495 -1111Q370 -1038 297 -913Q224 -788 224 -640Q224 -492 297 -367Q370 -242 495 -169Q620 -96 768 -96Q916 -96 1041 -169Q1166 -242 1239 -367Q1312 -492 1312 -640Q1312 -788 1239 -913Q1166 -1038 1041 -1111ZM1433 -1025.5Q1536 -849 1536 -640Q1536 -431 1433 -254.5Q1330 -78 1153.5 25Q977 128 768 128Q559 128 382.5 25Q206 -78 103 -254.5Q0 -431 0 -640Q0 -849 103 -1025.5Q206 -1202 382.5 -1305Q559 -1408 768 -1408Q977 -1408 1153.5 -1305Q1330 -1202 1433 -1025.5Z"/></svg><svg class="fa" viewBox="0.0 -1408.0 1536.0 1536.0" style="left:637.63px;top:8.93px;width:14.74px;height:14.74px;fill:#2d9a3a;stroke:#2d9a3a;stroke-width:21px;"><path d="M1284 -802Q1284 -830 1266 -848L1175 -938Q1156 -957 1130 -957Q1104 -957 1085 -938L677 -531L451 -757Q432 -776 406 -776Q380 -776 361 -757L270 -667Q252 -649 252 -621Q252 -594 270 -576L632 -214Q651 -195 677 -195Q704 -195 723 -214L1266 -757Q1284 -775 1284 -802ZM1433 -1025.5Q1536 -849 1536 -640Q1536 -431 1433 -254.5Q1330 -78 1153.5 25Q977 128 768 128Q559 128 382.5 25Q206 -78 103 -254.5Q0 -431 0 -640Q0 -849 103 -1025.5Q206 -1202 382.5 -1305Q559 -1408 768 -1408Q977 -1408 1153.5 -1305Q1330 -1202 1433 -1025.5Z"/></svg><div class="c" style="left:668.3px">ABC0000000031</div><div class="c" style="left:951.9px">Electronic book text (EPUB)</div><div class="c" style="left:1386.7px"><a>AI</a> &nbsp; <a>Onix</a></div></div>
<div class="tr " style="top:538.7px"><div class="cb"></div><svg class="fa" viewBox="0.0 -1408.0 1536.0 1536.0" style="left:45.60px;top:8.70px;width:16.00px;height:16.00px;fill:#1c84c6;stroke:#1c84c6;stroke-width:29px;"><path d="M1041 -1111Q916 -1184 768 -1184Q620 -1184 495 -1111Q370 -1038 297 -913Q224 -788 224 -640Q224 -492 297 -367Q370 -242 495 -169Q620 -96 768 -96Q916 -96 1041 -169Q1166 -242 1239 -367Q1312 -492 1312 -640Q1312 -788 1239 -913Q1166 -1038 1041 -1111ZM1433 -1025.5Q1536 -849 1536 -640Q1536 -431 1433 -254.5Q1330 -78 1153.5 25Q977 128 768 128Q559 128 382.5 25Q206 -78 103 -254.5Q0 -431 0 -640Q0 -849 103 -1025.5Q206 -1202 382.5 -1305Q559 -1408 768 -1408Q977 -1408 1153.5 -1305Q1330 -1202 1433 -1025.5Z"/></svg><div class="c" style="left:82.2px"><a>Demonstration Title 13</a></div><svg class="fa" viewBox="0.0 -1408.0 1536.0 1536.0" style="left:560.63px;top:8.93px;width:14.74px;height:14.74px;fill:#e0636a;stroke:#e0636a;stroke-width:21px;"><path d="M1041 -1111Q916 -1184 768 -1184Q620 -1184 495 -1111Q370 -1038 297 -913Q224 -788 224 -640Q224 -492 297 -367Q370 -242 495 -169Q620 -96 768 -96Q916 -96 1041 -169Q1166 -242 1239 -367Q1312 -492 1312 -640Q1312 -788 1239 -913Q1166 -1038 1041 -1111ZM1433 -1025.5Q1536 -849 1536 -640Q1536 -431 1433 -254.5Q1330 -78 1153.5 25Q977 128 768 128Q559 128 382.5 25Q206 -78 103 -254.5Q0 -431 0 -640Q0 -849 103 -1025.5Q206 -1202 382.5 -1305Q559 -1408 768 -1408Q977 -1408 1153.5 -1305Q1330 -1202 1433 -1025.5Z"/></svg><svg class="fa" viewBox="0.0 -1408.0 1536.0 1536.0" style="left:579.88px;top:8.93px;width:14.74px;height:14.74px;fill:#e0636a;stroke:#e0636a;stroke-width:21px;"><path d="M1041 -1111Q916 -1184 768 -1184Q620 -1184 495 -1111Q370 -1038 297 -913Q224 -788 224 -640Q224 -492 297 -367Q370 -242 495 -169Q620 -96 768 -96Q916 -96 1041 -169Q1166 -242 1239 -367Q1312 -492 1312 -640Q1312 -788 1239 -913Q1166 -1038 1041 -1111ZM1433 -1025.5Q1536 -849 1536 -640Q1536 -431 1433 -254.5Q1330 -78 1153.5 25Q977 128 768 128Q559 128 382.5 25Q206 -78 103 -254.5Q0 -431 0 -640Q0 -849 103 -1025.5Q206 -1202 382.5 -1305Q559 -1408 768 -1408Q977 -1408 1153.5 -1305Q1330 -1202 1433 -1025.5Z"/></svg><svg class="fa" viewBox="0.0 -1408.0 1536.0 1536.0" style="left:599.13px;top:8.93px;width:14.74px;height:14.74px;fill:#2d9a3a;stroke:#2d9a3a;stroke-width:21px;"><path d="M1284 -802Q1284 -830 1266 -848L1175 -938Q1156 -957 1130 -957Q1104 -957 1085 -938L677 -531L451 -757Q432 -776 406 -776Q380 -776 361 -757L270 -667Q252 -649 252 -621Q252 -594 270 -576L632 -214Q651 -195 677 -195Q704 -195 723 -214L1266 -757Q1284 -775 1284 -802ZM1433 -1025.5Q1536 -849 1536 -640Q1536 -431 1433 -254.5Q1330 -78 1153.5 25Q977 128 768 128Q559 128 382.5 25Q206 -78 103 -254.5Q0 -431 0 -640Q0 -849 103 -1025.5Q206 -1202 382.5 -1305Q559 -1408 768 -1408Q977 -1408 1153.5 -1305Q1330 -1202 1433 -1025.5Z"/></svg><svg class="fa" viewBox="0.0 -1408.0 1536.0 1536.0" style="left:618.38px;top:8.93px;width:14.74px;height:14.74px;fill:#e0636a;stroke:#e0636a;stroke-width:21px;"><path d="M1041 -1111Q916 -1184 768 -1184Q620 -1184 495 -1111Q370 -1038 297 -913Q224 -788 224 -640Q224 -492 297 -367Q370 -242 495 -169Q620 -96 768 -96Q916 -96 1041 -169Q1166 -242 1239 -367Q1312 -492 1312 -640Q1312 -788 1239 -913Q1166 -1038 1041 -1111ZM1433 -1025.5Q1536 -849 1536 -640Q1536 -431 1433 -254.5Q1330 -78 1153.5 25Q977 128 768 128Q559 128 382.5 25Q206 -78 103 -254.5Q0 -431 0 -640Q0 -849 103 -1025.5Q206 -1202 382.5 -1305Q559 -1408 768 -1408Q977 -1408 1153.5 -1305Q1330 -1202 1433 -1025.5Z"/></svg><svg class="fa" viewBox="0.0 -1408.0 1536.0 1536.0" style="left:637.63px;top:8.93px;width:14.74px;height:14.74px;fill:#2d9a3a;stroke:#2d9a3a;stroke-width:21px;"><path d="M1284 -802Q1284 -830 1266 -848L1175 -938Q1156 -957 1130 -957Q1104 -957 1085 -938L677 -531L451 -757Q432 -776 406 -776Q380 -776 361 -757L270 -667Q252 -649 252 -621Q252 -594 270 -576L632 -214Q651 -195 677 -195Q704 -195 723 -214L1266 -757Q1284 -775 1284 -802ZM1433 -1025.5Q1536 -849 1536 -640Q1536 -431 1433 -254.5Q1330 -78 1153.5 25Q977 128 768 128Q559 128 382.5 25Q206 -78 103 -254.5Q0 -431 0 -640Q0 -849 103 -1025.5Q206 -1202 382.5 -1305Q559 -1408 768 -1408Q977 -1408 1153.5 -1305Q1330 -1202 1433 -1025.5Z"/></svg><div class="c" style="left:668.3px">ABC0000000032</div><div class="c" style="left:951.9px">Hardback</div><div class="c" style="left:1386.7px"><a>AI</a> &nbsp; <a>Onix</a></div></div>
<div class="tr odd" style="top:575.7px"><div class="cb"></div><svg class="fa" viewBox="0.0 -1408.0 1536.0 1536.0" style="left:45.60px;top:8.70px;width:16.00px;height:16.00px;fill:#1c84c6;stroke:#1c84c6;stroke-width:29px;"><path d="M1041 -1111Q916 -1184 768 -1184Q620 -1184 495 -1111Q370 -1038 297 -913Q224 -788 224 -640Q224 -492 297 -367Q370 -242 495 -169Q620 -96 768 -96Q916 -96 1041 -169Q1166 -242 1239 -367Q1312 -492 1312 -640Q1312 -788 1239 -913Q1166 -1038 1041 -1111ZM1433 -1025.5Q1536 -849 1536 -640Q1536 -431 1433 -254.5Q1330 -78 1153.5 25Q977 128 768 128Q559 128 382.5 25Q206 -78 103 -254.5Q0 -431 0 -640Q0 -849 103 -1025.5Q206 -1202 382.5 -1305Q559 -1408 768 -1408Q977 -1408 1153.5 -1305Q1330 -1202 1433 -1025.5Z"/></svg><div class="c" style="left:82.2px"><a>Demonstration Title 14</a></div><svg class="fa" viewBox="0.0 -1408.0 1536.0 1536.0" style="left:560.63px;top:8.93px;width:14.74px;height:14.74px;fill:#e0636a;stroke:#e0636a;stroke-width:21px;"><path d="M1041 -1111Q916 -1184 768 -1184Q620 -1184 495 -1111Q370 -1038 297 -913Q224 -788 224 -640Q224 -492 297 -367Q370 -242 495 -169Q620 -96 768 -96Q916 -96 1041 -169Q1166 -242 1239 -367Q1312 -492 1312 -640Q1312 -788 1239 -913Q1166 -1038 1041 -1111ZM1433 -1025.5Q1536 -849 1536 -640Q1536 -431 1433 -254.5Q1330 -78 1153.5 25Q977 128 768 128Q559 128 382.5 25Q206 -78 103 -254.5Q0 -431 0 -640Q0 -849 103 -1025.5Q206 -1202 382.5 -1305Q559 -1408 768 -1408Q977 -1408 1153.5 -1305Q1330 -1202 1433 -1025.5Z"/></svg><svg class="fa" viewBox="0.0 -1408.0 1536.0 1536.0" style="left:579.88px;top:8.93px;width:14.74px;height:14.74px;fill:#e0636a;stroke:#e0636a;stroke-width:21px;"><path d="M1041 -1111Q916 -1184 768 -1184Q620 -1184 495 -1111Q370 -1038 297 -913Q224 -788 224 -640Q224 -492 297 -367Q370 -242 495 -169Q620 -96 768 -96Q916 -96 1041 -169Q1166 -242 1239 -367Q1312 -492 1312 -640Q1312 -788 1239 -913Q1166 -1038 1041 -1111ZM1433 -1025.5Q1536 -849 1536 -640Q1536 -431 1433 -254.5Q1330 -78 1153.5 25Q977 128 768 128Q559 128 382.5 25Q206 -78 103 -254.5Q0 -431 0 -640Q0 -849 103 -1025.5Q206 -1202 382.5 -1305Q559 -1408 768 -1408Q977 -1408 1153.5 -1305Q1330 -1202 1433 -1025.5Z"/></svg><svg class="fa" viewBox="0.0 -1408.0 1536.0 1536.0" style="left:599.13px;top:8.93px;width:14.74px;height:14.74px;fill:#2d9a3a;stroke:#2d9a3a;stroke-width:21px;"><path d="M1284 -802Q1284 -830 1266 -848L1175 -938Q1156 -957 1130 -957Q1104 -957 1085 -938L677 -531L451 -757Q432 -776 406 -776Q380 -776 361 -757L270 -667Q252 -649 252 -621Q252 -594 270 -576L632 -214Q651 -195 677 -195Q704 -195 723 -214L1266 -757Q1284 -775 1284 -802ZM1433 -1025.5Q1536 -849 1536 -640Q1536 -431 1433 -254.5Q1330 -78 1153.5 25Q977 128 768 128Q559 128 382.5 25Q206 -78 103 -254.5Q0 -431 0 -640Q0 -849 103 -1025.5Q206 -1202 382.5 -1305Q559 -1408 768 -1408Q977 -1408 1153.5 -1305Q1330 -1202 1433 -1025.5Z"/></svg><svg class="fa" viewBox="0.0 -1408.0 1536.0 1536.0" style="left:618.38px;top:8.93px;width:14.74px;height:14.74px;fill:#e0636a;stroke:#e0636a;stroke-width:21px;"><path d="M1041 -1111Q916 -1184 768 -1184Q620 -1184 495 -1111Q370 -1038 297 -913Q224 -788 224 -640Q224 -492 297 -367Q370 -242 495 -169Q620 -96 768 -96Q916 -96 1041 -169Q1166 -242 1239 -367Q1312 -492 1312 -640Q1312 -788 1239 -913Q1166 -1038 1041 -1111ZM1433 -1025.5Q1536 -849 1536 -640Q1536 -431 1433 -254.5Q1330 -78 1153.5 25Q977 128 768 128Q559 128 382.5 25Q206 -78 103 -254.5Q0 -431 0 -640Q0 -849 103 -1025.5Q206 -1202 382.5 -1305Q559 -1408 768 -1408Q977 -1408 1153.5 -1305Q1330 -1202 1433 -1025.5Z"/></svg><svg class="fa" viewBox="0.0 -1408.0 1536.0 1536.0" style="left:637.63px;top:8.93px;width:14.74px;height:14.74px;fill:#2d9a3a;stroke:#2d9a3a;stroke-width:21px;"><path d="M1284 -802Q1284 -830 1266 -848L1175 -938Q1156 -957 1130 -957Q1104 -957 1085 -938L677 -531L451 -757Q432 -776 406 -776Q380 -776 361 -757L270 -667Q252 -649 252 -621Q252 -594 270 -576L632 -214Q651 -195 677 -195Q704 -195 723 -214L1266 -757Q1284 -775 1284 -802ZM1433 -1025.5Q1536 -849 1536 -640Q1536 -431 1433 -254.5Q1330 -78 1153.5 25Q977 128 768 128Q559 128 382.5 25Q206 -78 103 -254.5Q0 -431 0 -640Q0 -849 103 -1025.5Q206 -1202 382.5 -1305Q559 -1408 768 -1408Q977 -1408 1153.5 -1305Q1330 -1202 1433 -1025.5Z"/></svg><div class="c" style="left:668.3px">ABC0000000033</div><div class="c" style="left:951.9px">Hardback</div><div class="c" style="left:1386.7px"><a>AI</a> &nbsp; <a>Onix</a></div></div>
<div class="tr " style="top:612.7px"><div class="cb"></div><svg class="fa" viewBox="0.0 -1408.0 1536.0 1536.0" style="left:45.60px;top:8.70px;width:16.00px;height:16.00px;fill:#1c84c6;stroke:#1c84c6;stroke-width:29px;"><path d="M1041 -1111Q916 -1184 768 -1184Q620 -1184 495 -1111Q370 -1038 297 -913Q224 -788 224 -640Q224 -492 297 -367Q370 -242 495 -169Q620 -96 768 -96Q916 -96 1041 -169Q1166 -242 1239 -367Q1312 -492 1312 -640Q1312 -788 1239 -913Q1166 -1038 1041 -1111ZM1433 -1025.5Q1536 -849 1536 -640Q1536 -431 1433 -254.5Q1330 -78 1153.5 25Q977 128 768 128Q559 128 382.5 25Q206 -78 103 -254.5Q0 -431 0 -640Q0 -849 103 -1025.5Q206 -1202 382.5 -1305Q559 -1408 768 -1408Q977 -1408 1153.5 -1305Q1330 -1202 1433 -1025.5Z"/></svg><div class="c" style="left:82.2px"><a>Demonstration Title 14</a></div><svg class="fa" viewBox="0.0 -1408.0 1536.0 1536.0" style="left:560.63px;top:8.93px;width:14.74px;height:14.74px;fill:#e0636a;stroke:#e0636a;stroke-width:21px;"><path d="M1041 -1111Q916 -1184 768 -1184Q620 -1184 495 -1111Q370 -1038 297 -913Q224 -788 224 -640Q224 -492 297 -367Q370 -242 495 -169Q620 -96 768 -96Q916 -96 1041 -169Q1166 -242 1239 -367Q1312 -492 1312 -640Q1312 -788 1239 -913Q1166 -1038 1041 -1111ZM1433 -1025.5Q1536 -849 1536 -640Q1536 -431 1433 -254.5Q1330 -78 1153.5 25Q977 128 768 128Q559 128 382.5 25Q206 -78 103 -254.5Q0 -431 0 -640Q0 -849 103 -1025.5Q206 -1202 382.5 -1305Q559 -1408 768 -1408Q977 -1408 1153.5 -1305Q1330 -1202 1433 -1025.5Z"/></svg><svg class="fa" viewBox="0.0 -1408.0 1536.0 1536.0" style="left:579.88px;top:8.93px;width:14.74px;height:14.74px;fill:#e0636a;stroke:#e0636a;stroke-width:21px;"><path d="M1041 -1111Q916 -1184 768 -1184Q620 -1184 495 -1111Q370 -1038 297 -913Q224 -788 224 -640Q224 -492 297 -367Q370 -242 495 -169Q620 -96 768 -96Q916 -96 1041 -169Q1166 -242 1239 -367Q1312 -492 1312 -640Q1312 -788 1239 -913Q1166 -1038 1041 -1111ZM1433 -1025.5Q1536 -849 1536 -640Q1536 -431 1433 -254.5Q1330 -78 1153.5 25Q977 128 768 128Q559 128 382.5 25Q206 -78 103 -254.5Q0 -431 0 -640Q0 -849 103 -1025.5Q206 -1202 382.5 -1305Q559 -1408 768 -1408Q977 -1408 1153.5 -1305Q1330 -1202 1433 -1025.5Z"/></svg><svg class="fa" viewBox="0.0 -1408.0 1536.0 1536.0" style="left:599.13px;top:8.93px;width:14.74px;height:14.74px;fill:#2d9a3a;stroke:#2d9a3a;stroke-width:21px;"><path d="M1284 -802Q1284 -830 1266 -848L1175 -938Q1156 -957 1130 -957Q1104 -957 1085 -938L677 -531L451 -757Q432 -776 406 -776Q380 -776 361 -757L270 -667Q252 -649 252 -621Q252 -594 270 -576L632 -214Q651 -195 677 -195Q704 -195 723 -214L1266 -757Q1284 -775 1284 -802ZM1433 -1025.5Q1536 -849 1536 -640Q1536 -431 1433 -254.5Q1330 -78 1153.5 25Q977 128 768 128Q559 128 382.5 25Q206 -78 103 -254.5Q0 -431 0 -640Q0 -849 103 -1025.5Q206 -1202 382.5 -1305Q559 -1408 768 -1408Q977 -1408 1153.5 -1305Q1330 -1202 1433 -1025.5Z"/></svg><svg class="fa" viewBox="0.0 -1408.0 1536.0 1536.0" style="left:618.38px;top:8.93px;width:14.74px;height:14.74px;fill:#e0636a;stroke:#e0636a;stroke-width:21px;"><path d="M1041 -1111Q916 -1184 768 -1184Q620 -1184 495 -1111Q370 -1038 297 -913Q224 -788 224 -640Q224 -492 297 -367Q370 -242 495 -169Q620 -96 768 -96Q916 -96 1041 -169Q1166 -242 1239 -367Q1312 -492 1312 -640Q1312 -788 1239 -913Q1166 -1038 1041 -1111ZM1433 -1025.5Q1536 -849 1536 -640Q1536 -431 1433 -254.5Q1330 -78 1153.5 25Q977 128 768 128Q559 128 382.5 25Q206 -78 103 -254.5Q0 -431 0 -640Q0 -849 103 -1025.5Q206 -1202 382.5 -1305Q559 -1408 768 -1408Q977 -1408 1153.5 -1305Q1330 -1202 1433 -1025.5Z"/></svg><svg class="fa" viewBox="0.0 -1408.0 1536.0 1536.0" style="left:637.63px;top:8.93px;width:14.74px;height:14.74px;fill:#2d9a3a;stroke:#2d9a3a;stroke-width:21px;"><path d="M1284 -802Q1284 -830 1266 -848L1175 -938Q1156 -957 1130 -957Q1104 -957 1085 -938L677 -531L451 -757Q432 -776 406 -776Q380 -776 361 -757L270 -667Q252 -649 252 -621Q252 -594 270 -576L632 -214Q651 -195 677 -195Q704 -195 723 -214L1266 -757Q1284 -775 1284 -802ZM1433 -1025.5Q1536 -849 1536 -640Q1536 -431 1433 -254.5Q1330 -78 1153.5 25Q977 128 768 128Q559 128 382.5 25Q206 -78 103 -254.5Q0 -431 0 -640Q0 -849 103 -1025.5Q206 -1202 382.5 -1305Q559 -1408 768 -1408Q977 -1408 1153.5 -1305Q1330 -1202 1433 -1025.5Z"/></svg><div class="c" style="left:668.3px">ABC0000000034</div><div class="c" style="left:951.9px">Electronic book text (Kindle)</div><div class="c" style="left:1386.7px"><a>AI</a> &nbsp; <a>Onix</a></div></div>
<div class="tr odd" style="top:649.7px"><div class="cb"></div><svg class="fa" viewBox="0.0 -1408.0 1536.0 1536.0" style="left:45.60px;top:8.70px;width:16.00px;height:16.00px;fill:#1c84c6;stroke:#1c84c6;stroke-width:29px;"><path d="M1041 -1111Q916 -1184 768 -1184Q620 -1184 495 -1111Q370 -1038 297 -913Q224 -788 224 -640Q224 -492 297 -367Q370 -242 495 -169Q620 -96 768 -96Q916 -96 1041 -169Q1166 -242 1239 -367Q1312 -492 1312 -640Q1312 -788 1239 -913Q1166 -1038 1041 -1111ZM1433 -1025.5Q1536 -849 1536 -640Q1536 -431 1433 -254.5Q1330 -78 1153.5 25Q977 128 768 128Q559 128 382.5 25Q206 -78 103 -254.5Q0 -431 0 -640Q0 -849 103 -1025.5Q206 -1202 382.5 -1305Q559 -1408 768 -1408Q977 -1408 1153.5 -1305Q1330 -1202 1433 -1025.5Z"/></svg><div class="c" style="left:82.2px"><a>Demonstration Title 15</a></div><svg class="fa" viewBox="0.0 -1408.0 1536.0 1536.0" style="left:560.63px;top:8.93px;width:14.74px;height:14.74px;fill:#e0636a;stroke:#e0636a;stroke-width:21px;"><path d="M1041 -1111Q916 -1184 768 -1184Q620 -1184 495 -1111Q370 -1038 297 -913Q224 -788 224 -640Q224 -492 297 -367Q370 -242 495 -169Q620 -96 768 -96Q916 -96 1041 -169Q1166 -242 1239 -367Q1312 -492 1312 -640Q1312 -788 1239 -913Q1166 -1038 1041 -1111ZM1433 -1025.5Q1536 -849 1536 -640Q1536 -431 1433 -254.5Q1330 -78 1153.5 25Q977 128 768 128Q559 128 382.5 25Q206 -78 103 -254.5Q0 -431 0 -640Q0 -849 103 -1025.5Q206 -1202 382.5 -1305Q559 -1408 768 -1408Q977 -1408 1153.5 -1305Q1330 -1202 1433 -1025.5Z"/></svg><svg class="fa" viewBox="0.0 -1408.0 1536.0 1536.0" style="left:579.88px;top:8.93px;width:14.74px;height:14.74px;fill:#e0636a;stroke:#e0636a;stroke-width:21px;"><path d="M1041 -1111Q916 -1184 768 -1184Q620 -1184 495 -1111Q370 -1038 297 -913Q224 -788 224 -640Q224 -492 297 -367Q370 -242 495 -169Q620 -96 768 -96Q916 -96 1041 -169Q1166 -242 1239 -367Q1312 -492 1312 -640Q1312 -788 1239 -913Q1166 -1038 1041 -1111ZM1433 -1025.5Q1536 -849 1536 -640Q1536 -431 1433 -254.5Q1330 -78 1153.5 25Q977 128 768 128Q559 128 382.5 25Q206 -78 103 -254.5Q0 -431 0 -640Q0 -849 103 -1025.5Q206 -1202 382.5 -1305Q559 -1408 768 -1408Q977 -1408 1153.5 -1305Q1330 -1202 1433 -1025.5Z"/></svg><svg class="fa" viewBox="0.0 -1408.0 1536.0 1536.0" style="left:599.13px;top:8.93px;width:14.74px;height:14.74px;fill:#2d9a3a;stroke:#2d9a3a;stroke-width:21px;"><path d="M1284 -802Q1284 -830 1266 -848L1175 -938Q1156 -957 1130 -957Q1104 -957 1085 -938L677 -531L451 -757Q432 -776 406 -776Q380 -776 361 -757L270 -667Q252 -649 252 -621Q252 -594 270 -576L632 -214Q651 -195 677 -195Q704 -195 723 -214L1266 -757Q1284 -775 1284 -802ZM1433 -1025.5Q1536 -849 1536 -640Q1536 -431 1433 -254.5Q1330 -78 1153.5 25Q977 128 768 128Q559 128 382.5 25Q206 -78 103 -254.5Q0 -431 0 -640Q0 -849 103 -1025.5Q206 -1202 382.5 -1305Q559 -1408 768 -1408Q977 -1408 1153.5 -1305Q1330 -1202 1433 -1025.5Z"/></svg><svg class="fa" viewBox="0.0 -1408.0 1536.0 1536.0" style="left:618.38px;top:8.93px;width:14.74px;height:14.74px;fill:#e0636a;stroke:#e0636a;stroke-width:21px;"><path d="M1041 -1111Q916 -1184 768 -1184Q620 -1184 495 -1111Q370 -1038 297 -913Q224 -788 224 -640Q224 -492 297 -367Q370 -242 495 -169Q620 -96 768 -96Q916 -96 1041 -169Q1166 -242 1239 -367Q1312 -492 1312 -640Q1312 -788 1239 -913Q1166 -1038 1041 -1111ZM1433 -1025.5Q1536 -849 1536 -640Q1536 -431 1433 -254.5Q1330 -78 1153.5 25Q977 128 768 128Q559 128 382.5 25Q206 -78 103 -254.5Q0 -431 0 -640Q0 -849 103 -1025.5Q206 -1202 382.5 -1305Q559 -1408 768 -1408Q977 -1408 1153.5 -1305Q1330 -1202 1433 -1025.5Z"/></svg><svg class="fa" viewBox="0.0 -1408.0 1536.0 1536.0" style="left:637.63px;top:8.93px;width:14.74px;height:14.74px;fill:#2d9a3a;stroke:#2d9a3a;stroke-width:21px;"><path d="M1284 -802Q1284 -830 1266 -848L1175 -938Q1156 -957 1130 -957Q1104 -957 1085 -938L677 -531L451 -757Q432 -776 406 -776Q380 -776 361 -757L270 -667Q252 -649 252 -621Q252 -594 270 -576L632 -214Q651 -195 677 -195Q704 -195 723 -214L1266 -757Q1284 -775 1284 -802ZM1433 -1025.5Q1536 -849 1536 -640Q1536 -431 1433 -254.5Q1330 -78 1153.5 25Q977 128 768 128Q559 128 382.5 25Q206 -78 103 -254.5Q0 -431 0 -640Q0 -849 103 -1025.5Q206 -1202 382.5 -1305Q559 -1408 768 -1408Q977 -1408 1153.5 -1305Q1330 -1202 1433 -1025.5Z"/></svg><div class="c" style="left:668.3px">ABC0000000036</div><div class="c" style="left:951.9px">Paperback</div><div class="c" style="left:1386.7px"><a>AI</a> &nbsp; <a>Onix</a></div></div>
<div class="tr " style="top:686.7px"><div class="cb"></div><svg class="fa" viewBox="0.0 -1408.0 1536.0 1536.0" style="left:45.60px;top:8.70px;width:16.00px;height:16.00px;fill:#1c84c6;stroke:#1c84c6;stroke-width:29px;"><path d="M1041 -1111Q916 -1184 768 -1184Q620 -1184 495 -1111Q370 -1038 297 -913Q224 -788 224 -640Q224 -492 297 -367Q370 -242 495 -169Q620 -96 768 -96Q916 -96 1041 -169Q1166 -242 1239 -367Q1312 -492 1312 -640Q1312 -788 1239 -913Q1166 -1038 1041 -1111ZM1433 -1025.5Q1536 -849 1536 -640Q1536 -431 1433 -254.5Q1330 -78 1153.5 25Q977 128 768 128Q559 128 382.5 25Q206 -78 103 -254.5Q0 -431 0 -640Q0 -849 103 -1025.5Q206 -1202 382.5 -1305Q559 -1408 768 -1408Q977 -1408 1153.5 -1305Q1330 -1202 1433 -1025.5Z"/></svg><div class="c" style="left:82.2px"><a>Demonstration Title 15</a></div><svg class="fa" viewBox="0.0 -1408.0 1536.0 1536.0" style="left:560.63px;top:8.93px;width:14.74px;height:14.74px;fill:#e0636a;stroke:#e0636a;stroke-width:21px;"><path d="M1041 -1111Q916 -1184 768 -1184Q620 -1184 495 -1111Q370 -1038 297 -913Q224 -788 224 -640Q224 -492 297 -367Q370 -242 495 -169Q620 -96 768 -96Q916 -96 1041 -169Q1166 -242 1239 -367Q1312 -492 1312 -640Q1312 -788 1239 -913Q1166 -1038 1041 -1111ZM1433 -1025.5Q1536 -849 1536 -640Q1536 -431 1433 -254.5Q1330 -78 1153.5 25Q977 128 768 128Q559 128 382.5 25Q206 -78 103 -254.5Q0 -431 0 -640Q0 -849 103 -1025.5Q206 -1202 382.5 -1305Q559 -1408 768 -1408Q977 -1408 1153.5 -1305Q1330 -1202 1433 -1025.5Z"/></svg><svg class="fa" viewBox="0.0 -1408.0 1536.0 1536.0" style="left:579.88px;top:8.93px;width:14.74px;height:14.74px;fill:#e0636a;stroke:#e0636a;stroke-width:21px;"><path d="M1041 -1111Q916 -1184 768 -1184Q620 -1184 495 -1111Q370 -1038 297 -913Q224 -788 224 -640Q224 -492 297 -367Q370 -242 495 -169Q620 -96 768 -96Q916 -96 1041 -169Q1166 -242 1239 -367Q1312 -492 1312 -640Q1312 -788 1239 -913Q1166 -1038 1041 -1111ZM1433 -1025.5Q1536 -849 1536 -640Q1536 -431 1433 -254.5Q1330 -78 1153.5 25Q977 128 768 128Q559 128 382.5 25Q206 -78 103 -254.5Q0 -431 0 -640Q0 -849 103 -1025.5Q206 -1202 382.5 -1305Q559 -1408 768 -1408Q977 -1408 1153.5 -1305Q1330 -1202 1433 -1025.5Z"/></svg><svg class="fa" viewBox="0.0 -1408.0 1536.0 1536.0" style="left:599.13px;top:8.93px;width:14.74px;height:14.74px;fill:#2d9a3a;stroke:#2d9a3a;stroke-width:21px;"><path d="M1284 -802Q1284 -830 1266 -848L1175 -938Q1156 -957 1130 -957Q1104 -957 1085 -938L677 -531L451 -757Q432 -776 406 -776Q380 -776 361 -757L270 -667Q252 -649 252 -621Q252 -594 270 -576L632 -214Q651 -195 677 -195Q704 -195 723 -214L1266 -757Q1284 -775 1284 -802ZM1433 -1025.5Q1536 -849 1536 -640Q1536 -431 1433 -254.5Q1330 -78 1153.5 25Q977 128 768 128Q559 128 382.5 25Q206 -78 103 -254.5Q0 -431 0 -640Q0 -849 103 -1025.5Q206 -1202 382.5 -1305Q559 -1408 768 -1408Q977 -1408 1153.5 -1305Q1330 -1202 1433 -1025.5Z"/></svg><svg class="fa" viewBox="0.0 -1408.0 1536.0 1536.0" style="left:618.38px;top:8.93px;width:14.74px;height:14.74px;fill:#e0636a;stroke:#e0636a;stroke-width:21px;"><path d="M1041 -1111Q916 -1184 768 -1184Q620 -1184 495 -1111Q370 -1038 297 -913Q224 -788 224 -640Q224 -492 297 -367Q370 -242 495 -169Q620 -96 768 -96Q916 -96 1041 -169Q1166 -242 1239 -367Q1312 -492 1312 -640Q1312 -788 1239 -913Q1166 -1038 1041 -1111ZM1433 -1025.5Q1536 -849 1536 -640Q1536 -431 1433 -254.5Q1330 -78 1153.5 25Q977 128 768 128Q559 128 382.5 25Q206 -78 103 -254.5Q0 -431 0 -640Q0 -849 103 -1025.5Q206 -1202 382.5 -1305Q559 -1408 768 -1408Q977 -1408 1153.5 -1305Q1330 -1202 1433 -1025.5Z"/></svg><svg class="fa" viewBox="0.0 -1408.0 1536.0 1536.0" style="left:637.63px;top:8.93px;width:14.74px;height:14.74px;fill:#2d9a3a;stroke:#2d9a3a;stroke-width:21px;"><path d="M1284 -802Q1284 -830 1266 -848L1175 -938Q1156 -957 1130 -957Q1104 -957 1085 -938L677 -531L451 -757Q432 -776 406 -776Q380 -776 361 -757L270 -667Q252 -649 252 -621Q252 -594 270 -576L632 -214Q651 -195 677 -195Q704 -195 723 -214L1266 -757Q1284 -775 1284 -802ZM1433 -1025.5Q1536 -849 1536 -640Q1536 -431 1433 -254.5Q1330 -78 1153.5 25Q977 128 768 128Q559 128 382.5 25Q206 -78 103 -254.5Q0 -431 0 -640Q0 -849 103 -1025.5Q206 -1202 382.5 -1305Q559 -1408 768 -1408Q977 -1408 1153.5 -1305Q1330 -1202 1433 -1025.5Z"/></svg><div class="c" style="left:668.3px">ABC0000000037</div><div class="c" style="left:951.9px">Electronic book text (Kindle)</div><div class="c" style="left:1386.7px"><a>AI</a> &nbsp; <a>Onix</a></div></div>
<div class="tr odd" style="top:723.7px"><div class="cb"></div><svg class="fa" viewBox="0.0 -1408.0 1536.0 1536.0" style="left:45.60px;top:8.70px;width:16.00px;height:16.00px;fill:#1c84c6;stroke:#1c84c6;stroke-width:29px;"><path d="M1041 -1111Q916 -1184 768 -1184Q620 -1184 495 -1111Q370 -1038 297 -913Q224 -788 224 -640Q224 -492 297 -367Q370 -242 495 -169Q620 -96 768 -96Q916 -96 1041 -169Q1166 -242 1239 -367Q1312 -492 1312 -640Q1312 -788 1239 -913Q1166 -1038 1041 -1111ZM1433 -1025.5Q1536 -849 1536 -640Q1536 -431 1433 -254.5Q1330 -78 1153.5 25Q977 128 768 128Q559 128 382.5 25Q206 -78 103 -254.5Q0 -431 0 -640Q0 -849 103 -1025.5Q206 -1202 382.5 -1305Q559 -1408 768 -1408Q977 -1408 1153.5 -1305Q1330 -1202 1433 -1025.5Z"/></svg><div class="c" style="left:82.2px"><a>Demonstration Title 16</a></div><svg class="fa" viewBox="0.0 -1408.0 1536.0 1536.0" style="left:560.63px;top:8.93px;width:14.74px;height:14.74px;fill:#e0636a;stroke:#e0636a;stroke-width:21px;"><path d="M1041 -1111Q916 -1184 768 -1184Q620 -1184 495 -1111Q370 -1038 297 -913Q224 -788 224 -640Q224 -492 297 -367Q370 -242 495 -169Q620 -96 768 -96Q916 -96 1041 -169Q1166 -242 1239 -367Q1312 -492 1312 -640Q1312 -788 1239 -913Q1166 -1038 1041 -1111ZM1433 -1025.5Q1536 -849 1536 -640Q1536 -431 1433 -254.5Q1330 -78 1153.5 25Q977 128 768 128Q559 128 382.5 25Q206 -78 103 -254.5Q0 -431 0 -640Q0 -849 103 -1025.5Q206 -1202 382.5 -1305Q559 -1408 768 -1408Q977 -1408 1153.5 -1305Q1330 -1202 1433 -1025.5Z"/></svg><svg class="fa" viewBox="0.0 -1408.0 1536.0 1536.0" style="left:579.88px;top:8.93px;width:14.74px;height:14.74px;fill:#e0636a;stroke:#e0636a;stroke-width:21px;"><path d="M1041 -1111Q916 -1184 768 -1184Q620 -1184 495 -1111Q370 -1038 297 -913Q224 -788 224 -640Q224 -492 297 -367Q370 -242 495 -169Q620 -96 768 -96Q916 -96 1041 -169Q1166 -242 1239 -367Q1312 -492 1312 -640Q1312 -788 1239 -913Q1166 -1038 1041 -1111ZM1433 -1025.5Q1536 -849 1536 -640Q1536 -431 1433 -254.5Q1330 -78 1153.5 25Q977 128 768 128Q559 128 382.5 25Q206 -78 103 -254.5Q0 -431 0 -640Q0 -849 103 -1025.5Q206 -1202 382.5 -1305Q559 -1408 768 -1408Q977 -1408 1153.5 -1305Q1330 -1202 1433 -1025.5Z"/></svg><svg class="fa" viewBox="0.0 -1408.0 1536.0 1536.0" style="left:599.13px;top:8.93px;width:14.74px;height:14.74px;fill:#2d9a3a;stroke:#2d9a3a;stroke-width:21px;"><path d="M1284 -802Q1284 -830 1266 -848L1175 -938Q1156 -957 1130 -957Q1104 -957 1085 -938L677 -531L451 -757Q432 -776 406 -776Q380 -776 361 -757L270 -667Q252 -649 252 -621Q252 -594 270 -576L632 -214Q651 -195 677 -195Q704 -195 723 -214L1266 -757Q1284 -775 1284 -802ZM1433 -1025.5Q1536 -849 1536 -640Q1536 -431 1433 -254.5Q1330 -78 1153.5 25Q977 128 768 128Q559 128 382.5 25Q206 -78 103 -254.5Q0 -431 0 -640Q0 -849 103 -1025.5Q206 -1202 382.5 -1305Q559 -1408 768 -1408Q977 -1408 1153.5 -1305Q1330 -1202 1433 -1025.5Z"/></svg><svg class="fa" viewBox="0.0 -1408.0 1536.0 1536.0" style="left:618.38px;top:8.93px;width:14.74px;height:14.74px;fill:#e0636a;stroke:#e0636a;stroke-width:21px;"><path d="M1041 -1111Q916 -1184 768 -1184Q620 -1184 495 -1111Q370 -1038 297 -913Q224 -788 224 -640Q224 -492 297 -367Q370 -242 495 -169Q620 -96 768 -96Q916 -96 1041 -169Q1166 -242 1239 -367Q1312 -492 1312 -640Q1312 -788 1239 -913Q1166 -1038 1041 -1111ZM1433 -1025.5Q1536 -849 1536 -640Q1536 -431 1433 -254.5Q1330 -78 1153.5 25Q977 128 768 128Q559 128 382.5 25Q206 -78 103 -254.5Q0 -431 0 -640Q0 -849 103 -1025.5Q206 -1202 382.5 -1305Q559 -1408 768 -1408Q977 -1408 1153.5 -1305Q1330 -1202 1433 -1025.5Z"/></svg><svg class="fa" viewBox="0.0 -1408.0 1536.0 1536.0" style="left:637.63px;top:8.93px;width:14.74px;height:14.74px;fill:#2d9a3a;stroke:#2d9a3a;stroke-width:21px;"><path d="M1284 -802Q1284 -830 1266 -848L1175 -938Q1156 -957 1130 -957Q1104 -957 1085 -938L677 -531L451 -757Q432 -776 406 -776Q380 -776 361 -757L270 -667Q252 -649 252 -621Q252 -594 270 -576L632 -214Q651 -195 677 -195Q704 -195 723 -214L1266 -757Q1284 -775 1284 -802ZM1433 -1025.5Q1536 -849 1536 -640Q1536 -431 1433 -254.5Q1330 -78 1153.5 25Q977 128 768 128Q559 128 382.5 25Q206 -78 103 -254.5Q0 -431 0 -640Q0 -849 103 -1025.5Q206 -1202 382.5 -1305Q559 -1408 768 -1408Q977 -1408 1153.5 -1305Q1330 -1202 1433 -1025.5Z"/></svg><div class="c" style="left:668.3px">ABC0000000038</div><div class="c" style="left:951.9px">Paperback</div><div class="c" style="left:1386.7px"><a>AI</a> &nbsp; <a>Onix</a></div></div>
<div class="tr " style="top:760.7px"><div class="cb"></div><svg class="fa" viewBox="0.0 -1408.0 1536.0 1536.0" style="left:45.60px;top:8.70px;width:16.00px;height:16.00px;fill:#1c84c6;stroke:#1c84c6;stroke-width:29px;"><path d="M1041 -1111Q916 -1184 768 -1184Q620 -1184 495 -1111Q370 -1038 297 -913Q224 -788 224 -640Q224 -492 297 -367Q370 -242 495 -169Q620 -96 768 -96Q916 -96 1041 -169Q1166 -242 1239 -367Q1312 -492 1312 -640Q1312 -788 1239 -913Q1166 -1038 1041 -1111ZM1433 -1025.5Q1536 -849 1536 -640Q1536 -431 1433 -254.5Q1330 -78 1153.5 25Q977 128 768 128Q559 128 382.5 25Q206 -78 103 -254.5Q0 -431 0 -640Q0 -849 103 -1025.5Q206 -1202 382.5 -1305Q559 -1408 768 -1408Q977 -1408 1153.5 -1305Q1330 -1202 1433 -1025.5Z"/></svg><div class="c" style="left:82.2px"><a>Demonstration Title 16</a></div><svg class="fa" viewBox="0.0 -1408.0 1536.0 1536.0" style="left:560.63px;top:8.93px;width:14.74px;height:14.74px;fill:#e0636a;stroke:#e0636a;stroke-width:21px;"><path d="M1041 -1111Q916 -1184 768 -1184Q620 -1184 495 -1111Q370 -1038 297 -913Q224 -788 224 -640Q224 -492 297 -367Q370 -242 495 -169Q620 -96 768 -96Q916 -96 1041 -169Q1166 -242 1239 -367Q1312 -492 1312 -640Q1312 -788 1239 -913Q1166 -1038 1041 -1111ZM1433 -1025.5Q1536 -849 1536 -640Q1536 -431 1433 -254.5Q1330 -78 1153.5 25Q977 128 768 128Q559 128 382.5 25Q206 -78 103 -254.5Q0 -431 0 -640Q0 -849 103 -1025.5Q206 -1202 382.5 -1305Q559 -1408 768 -1408Q977 -1408 1153.5 -1305Q1330 -1202 1433 -1025.5Z"/></svg><svg class="fa" viewBox="0.0 -1408.0 1536.0 1536.0" style="left:579.88px;top:8.93px;width:14.74px;height:14.74px;fill:#e0636a;stroke:#e0636a;stroke-width:21px;"><path d="M1041 -1111Q916 -1184 768 -1184Q620 -1184 495 -1111Q370 -1038 297 -913Q224 -788 224 -640Q224 -492 297 -367Q370 -242 495 -169Q620 -96 768 -96Q916 -96 1041 -169Q1166 -242 1239 -367Q1312 -492 1312 -640Q1312 -788 1239 -913Q1166 -1038 1041 -1111ZM1433 -1025.5Q1536 -849 1536 -640Q1536 -431 1433 -254.5Q1330 -78 1153.5 25Q977 128 768 128Q559 128 382.5 25Q206 -78 103 -254.5Q0 -431 0 -640Q0 -849 103 -1025.5Q206 -1202 382.5 -1305Q559 -1408 768 -1408Q977 -1408 1153.5 -1305Q1330 -1202 1433 -1025.5Z"/></svg><svg class="fa" viewBox="0.0 -1408.0 1536.0 1536.0" style="left:599.13px;top:8.93px;width:14.74px;height:14.74px;fill:#2d9a3a;stroke:#2d9a3a;stroke-width:21px;"><path d="M1284 -802Q1284 -830 1266 -848L1175 -938Q1156 -957 1130 -957Q1104 -957 1085 -938L677 -531L451 -757Q432 -776 406 -776Q380 -776 361 -757L270 -667Q252 -649 252 -621Q252 -594 270 -576L632 -214Q651 -195 677 -195Q704 -195 723 -214L1266 -757Q1284 -775 1284 -802ZM1433 -1025.5Q1536 -849 1536 -640Q1536 -431 1433 -254.5Q1330 -78 1153.5 25Q977 128 768 128Q559 128 382.5 25Q206 -78 103 -254.5Q0 -431 0 -640Q0 -849 103 -1025.5Q206 -1202 382.5 -1305Q559 -1408 768 -1408Q977 -1408 1153.5 -1305Q1330 -1202 1433 -1025.5Z"/></svg><svg class="fa" viewBox="0.0 -1408.0 1536.0 1536.0" style="left:618.38px;top:8.93px;width:14.74px;height:14.74px;fill:#e0636a;stroke:#e0636a;stroke-width:21px;"><path d="M1041 -1111Q916 -1184 768 -1184Q620 -1184 495 -1111Q370 -1038 297 -913Q224 -788 224 -640Q224 -492 297 -367Q370 -242 495 -169Q620 -96 768 -96Q916 -96 1041 -169Q1166 -242 1239 -367Q1312 -492 1312 -640Q1312 -788 1239 -913Q1166 -1038 1041 -1111ZM1433 -1025.5Q1536 -849 1536 -640Q1536 -431 1433 -254.5Q1330 -78 1153.5 25Q977 128 768 128Q559 128 382.5 25Q206 -78 103 -254.5Q0 -431 0 -640Q0 -849 103 -1025.5Q206 -1202 382.5 -1305Q559 -1408 768 -1408Q977 -1408 1153.5 -1305Q1330 -1202 1433 -1025.5Z"/></svg><svg class="fa" viewBox="0.0 -1408.0 1536.0 1536.0" style="left:637.63px;top:8.93px;width:14.74px;height:14.74px;fill:#2d9a3a;stroke:#2d9a3a;stroke-width:21px;"><path d="M1284 -802Q1284 -830 1266 -848L1175 -938Q1156 -957 1130 -957Q1104 -957 1085 -938L677 -531L451 -757Q432 -776 406 -776Q380 -776 361 -757L270 -667Q252 -649 252 -621Q252 -594 270 -576L632 -214Q651 -195 677 -195Q704 -195 723 -214L1266 -757Q1284 -775 1284 -802ZM1433 -1025.5Q1536 -849 1536 -640Q1536 -431 1433 -254.5Q1330 -78 1153.5 25Q977 128 768 128Q559 128 382.5 25Q206 -78 103 -254.5Q0 -431 0 -640Q0 -849 103 -1025.5Q206 -1202 382.5 -1305Q559 -1408 768 -1408Q977 -1408 1153.5 -1305Q1330 -1202 1433 -1025.5Z"/></svg><div class="c" style="left:668.3px">ABC0000000039</div><div class="c" style="left:951.9px">Electronic book text (EPUB)</div><div class="c" style="left:1386.7px"><a>AI</a> &nbsp; <a>Onix</a></div></div>
</div><div id="ring"></div></div>
</div></body></html>
